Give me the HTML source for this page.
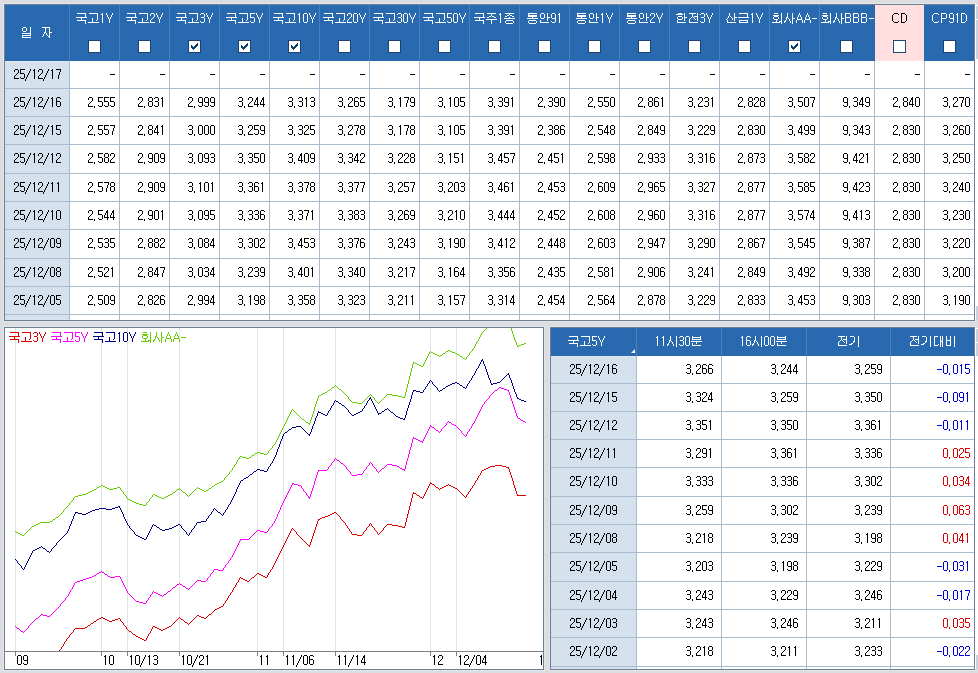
<!DOCTYPE html>
<html><head><meta charset="utf-8"><style>
html,body{margin:0;padding:0;width:978px;height:673px;overflow:hidden;background:#dcdde1;}
body{position:relative;font-family:"Liberation Sans", sans-serif;}
.t{position:absolute;white-space:nowrap;font-family:"Liberation Sans", sans-serif;}
</style></head><body>
<div style="position:absolute;left:0px;top:0px;width:978px;height:673px;background:#dcdde1;"></div><div style="position:absolute;left:3px;top:3px;width:973px;height:319px;background:#e5e5e8;"></div><div style="position:absolute;left:4px;top:4px;width:971px;height:317px;background:#6c8097;"></div><div style="position:absolute;left:5px;top:5px;width:969px;height:315px;background:#ffffff;"></div><div style="position:absolute;left:5px;top:5px;width:969px;height:56px;background:#2969b0;"></div><div style="position:absolute;left:875px;top:5px;width:49px;height:56px;background:#ffdfdf;"></div><div style="position:absolute;left:69px;top:5px;width:1px;height:56px;background:#4a80bc;"></div><div style="position:absolute;left:119px;top:5px;width:1px;height:56px;background:#4a80bc;"></div><div style="position:absolute;left:169px;top:5px;width:1px;height:56px;background:#4a80bc;"></div><div style="position:absolute;left:219px;top:5px;width:1px;height:56px;background:#4a80bc;"></div><div style="position:absolute;left:269px;top:5px;width:1px;height:56px;background:#4a80bc;"></div><div style="position:absolute;left:319px;top:5px;width:1px;height:56px;background:#4a80bc;"></div><div style="position:absolute;left:369px;top:5px;width:1px;height:56px;background:#4a80bc;"></div><div style="position:absolute;left:419px;top:5px;width:1px;height:56px;background:#4a80bc;"></div><div style="position:absolute;left:469px;top:5px;width:1px;height:56px;background:#4a80bc;"></div><div style="position:absolute;left:519px;top:5px;width:1px;height:56px;background:#4a80bc;"></div><div style="position:absolute;left:569px;top:5px;width:1px;height:56px;background:#4a80bc;"></div><div style="position:absolute;left:619px;top:5px;width:1px;height:56px;background:#4a80bc;"></div><div style="position:absolute;left:669px;top:5px;width:1px;height:56px;background:#4a80bc;"></div><div style="position:absolute;left:719px;top:5px;width:1px;height:56px;background:#4a80bc;"></div><div style="position:absolute;left:769px;top:5px;width:1px;height:56px;background:#4a80bc;"></div><div style="position:absolute;left:819px;top:5px;width:1px;height:56px;background:#4a80bc;"></div><div style="position:absolute;left:5px;top:61px;width:64px;height:259px;background:#d5e1ed;"></div><div style="position:absolute;left:5px;top:61px;width:64px;height:1px;background:#dfe8f1;"></div><div style="position:absolute;left:69px;top:61px;width:1px;height:259px;background:#a9bccf;"></div><div style="position:absolute;left:119px;top:61px;width:1px;height:259px;background:#a9bccf;"></div><div style="position:absolute;left:169px;top:61px;width:1px;height:259px;background:#a9bccf;"></div><div style="position:absolute;left:219px;top:61px;width:1px;height:259px;background:#a9bccf;"></div><div style="position:absolute;left:269px;top:61px;width:1px;height:259px;background:#a9bccf;"></div><div style="position:absolute;left:319px;top:61px;width:1px;height:259px;background:#a9bccf;"></div><div style="position:absolute;left:369px;top:61px;width:1px;height:259px;background:#a9bccf;"></div><div style="position:absolute;left:419px;top:61px;width:1px;height:259px;background:#a9bccf;"></div><div style="position:absolute;left:469px;top:61px;width:1px;height:259px;background:#a9bccf;"></div><div style="position:absolute;left:519px;top:61px;width:1px;height:259px;background:#a9bccf;"></div><div style="position:absolute;left:569px;top:61px;width:1px;height:259px;background:#a9bccf;"></div><div style="position:absolute;left:619px;top:61px;width:1px;height:259px;background:#a9bccf;"></div><div style="position:absolute;left:669px;top:61px;width:1px;height:259px;background:#a9bccf;"></div><div style="position:absolute;left:719px;top:61px;width:1px;height:259px;background:#a9bccf;"></div><div style="position:absolute;left:769px;top:61px;width:1px;height:259px;background:#a9bccf;"></div><div style="position:absolute;left:819px;top:61px;width:1px;height:259px;background:#a9bccf;"></div><div style="position:absolute;left:874px;top:61px;width:1px;height:259px;background:#a9bccf;"></div><div style="position:absolute;left:924px;top:61px;width:1px;height:259px;background:#a9bccf;"></div><div style="position:absolute;left:5px;top:88px;width:969px;height:1px;background:#a9bccf;"></div><div style="position:absolute;left:5px;top:116px;width:969px;height:1px;background:#a9bccf;"></div><div style="position:absolute;left:5px;top:144px;width:969px;height:1px;background:#a9bccf;"></div><div style="position:absolute;left:5px;top:173px;width:969px;height:1px;background:#a9bccf;"></div><div style="position:absolute;left:5px;top:201px;width:969px;height:1px;background:#a9bccf;"></div><div style="position:absolute;left:5px;top:229px;width:969px;height:1px;background:#a9bccf;"></div><div style="position:absolute;left:5px;top:258px;width:969px;height:1px;background:#a9bccf;"></div><div style="position:absolute;left:5px;top:286px;width:969px;height:1px;background:#a9bccf;"></div><div style="position:absolute;left:5px;top:314px;width:969px;height:1px;background:#a9bccf;"></div><div style="position:absolute;left:88px;top:40px;width:13px;height:13px;box-sizing:border-box;border:1px solid #1d4270;background:#fff"></div><div style="position:absolute;left:138px;top:40px;width:13px;height:13px;box-sizing:border-box;border:1px solid #1d4270;background:#fff"></div><div style="position:absolute;left:188px;top:40px;width:13px;height:13px;box-sizing:border-box;border:1px solid #1d4270;background:#fff"></div><svg style="position:absolute;left:188px;top:40px" width="13" height="13" shape-rendering="crispEdges"><path d="M3 5h1v3h-1zM4 6h1v3h-1zM5 7h1v3h-1zM6 6h1v3h-1zM7 5h1v3h-1zM8 4h1v3h-1zM9 3h1v3h-1z" fill="#0c3d6f"/></svg><div style="position:absolute;left:238px;top:40px;width:13px;height:13px;box-sizing:border-box;border:1px solid #1d4270;background:#fff"></div><svg style="position:absolute;left:238px;top:40px" width="13" height="13" shape-rendering="crispEdges"><path d="M3 5h1v3h-1zM4 6h1v3h-1zM5 7h1v3h-1zM6 6h1v3h-1zM7 5h1v3h-1zM8 4h1v3h-1zM9 3h1v3h-1z" fill="#0c3d6f"/></svg><div style="position:absolute;left:288px;top:40px;width:13px;height:13px;box-sizing:border-box;border:1px solid #1d4270;background:#fff"></div><svg style="position:absolute;left:288px;top:40px" width="13" height="13" shape-rendering="crispEdges"><path d="M3 5h1v3h-1zM4 6h1v3h-1zM5 7h1v3h-1zM6 6h1v3h-1zM7 5h1v3h-1zM8 4h1v3h-1zM9 3h1v3h-1z" fill="#0c3d6f"/></svg><div style="position:absolute;left:338px;top:40px;width:13px;height:13px;box-sizing:border-box;border:1px solid #1d4270;background:#fff"></div><div style="position:absolute;left:388px;top:40px;width:13px;height:13px;box-sizing:border-box;border:1px solid #1d4270;background:#fff"></div><div style="position:absolute;left:438px;top:40px;width:13px;height:13px;box-sizing:border-box;border:1px solid #1d4270;background:#fff"></div><div style="position:absolute;left:488px;top:40px;width:13px;height:13px;box-sizing:border-box;border:1px solid #1d4270;background:#fff"></div><div style="position:absolute;left:538px;top:40px;width:13px;height:13px;box-sizing:border-box;border:1px solid #1d4270;background:#fff"></div><div style="position:absolute;left:588px;top:40px;width:13px;height:13px;box-sizing:border-box;border:1px solid #1d4270;background:#fff"></div><div style="position:absolute;left:638px;top:40px;width:13px;height:13px;box-sizing:border-box;border:1px solid #1d4270;background:#fff"></div><div style="position:absolute;left:688px;top:40px;width:13px;height:13px;box-sizing:border-box;border:1px solid #1d4270;background:#fff"></div><div style="position:absolute;left:738px;top:40px;width:13px;height:13px;box-sizing:border-box;border:1px solid #1d4270;background:#fff"></div><div style="position:absolute;left:788px;top:40px;width:13px;height:13px;box-sizing:border-box;border:1px solid #1d4270;background:#fff"></div><svg style="position:absolute;left:788px;top:40px" width="13" height="13" shape-rendering="crispEdges"><path d="M3 5h1v3h-1zM4 6h1v3h-1zM5 7h1v3h-1zM6 6h1v3h-1zM7 5h1v3h-1zM8 4h1v3h-1zM9 3h1v3h-1z" fill="#0c3d6f"/></svg><div style="position:absolute;left:840px;top:40px;width:13px;height:13px;box-sizing:border-box;border:1px solid #1d4270;background:#fff"></div><div style="position:absolute;left:893px;top:40px;width:13px;height:13px;box-sizing:border-box;border:1px solid #1f4a7a;background:#fff"></div><div style="position:absolute;left:943px;top:40px;width:13px;height:13px;box-sizing:border-box;border:1px solid #1d4270;background:#fff"></div><div style="position:absolute;left:975px;top:5px;width:3px;height:315px;background:#ffffff;"></div><div style="position:absolute;left:976px;top:6px;width:2px;height:13px;background:#c8d2dd;"></div><div style="position:absolute;left:976px;top:20px;width:2px;height:39px;background:#c8d2dd;"></div><div style="position:absolute;left:976px;top:306px;width:2px;height:14px;background:#c8d2dd;"></div><div style="position:absolute;left:3px;top:326px;width:542px;height:345px;background:#e5e5e8;"></div><div style="position:absolute;left:4px;top:327px;width:540px;height:343px;background:#6c8097;"></div><div style="position:absolute;left:5px;top:328px;width:538px;height:341px;background:#ffffff;"></div><div style="position:absolute;left:549px;top:326px;width:427px;height:345px;background:#e5e5e8;"></div><div style="position:absolute;left:550px;top:327px;width:425px;height:343px;background:#6c8097;"></div><div style="position:absolute;left:551px;top:328px;width:423px;height:341px;background:#ffffff;"></div><div style="position:absolute;left:551px;top:328px;width:423px;height:28px;background:#2969b0;"></div><div style="position:absolute;left:636px;top:328px;width:1px;height:28px;background:#4a80bc;"></div><div style="position:absolute;left:721px;top:328px;width:1px;height:28px;background:#4a80bc;"></div><div style="position:absolute;left:806px;top:328px;width:1px;height:28px;background:#4a80bc;"></div><div style="position:absolute;left:890px;top:328px;width:1px;height:28px;background:#4a80bc;"></div><div style="position:absolute;left:551px;top:356px;width:85px;height:313px;background:#d5e1ed;"></div><div style="position:absolute;left:551px;top:356px;width:85px;height:1px;background:#dfe8f1;"></div><div style="position:absolute;left:636px;top:356px;width:1px;height:313px;background:#a9bccf;"></div><div style="position:absolute;left:721px;top:356px;width:1px;height:313px;background:#a9bccf;"></div><div style="position:absolute;left:806px;top:356px;width:1px;height:313px;background:#a9bccf;"></div><div style="position:absolute;left:890px;top:356px;width:1px;height:313px;background:#a9bccf;"></div><div style="position:absolute;left:551px;top:383px;width:423px;height:1px;background:#a9bccf;"></div><div style="position:absolute;left:551px;top:411px;width:423px;height:1px;background:#a9bccf;"></div><div style="position:absolute;left:551px;top:439px;width:423px;height:1px;background:#a9bccf;"></div><div style="position:absolute;left:551px;top:467px;width:423px;height:1px;background:#a9bccf;"></div><div style="position:absolute;left:551px;top:496px;width:423px;height:1px;background:#a9bccf;"></div><div style="position:absolute;left:551px;top:524px;width:423px;height:1px;background:#a9bccf;"></div><div style="position:absolute;left:551px;top:552px;width:423px;height:1px;background:#a9bccf;"></div><div style="position:absolute;left:551px;top:581px;width:423px;height:1px;background:#a9bccf;"></div><div style="position:absolute;left:551px;top:609px;width:423px;height:1px;background:#a9bccf;"></div><div style="position:absolute;left:551px;top:637px;width:423px;height:1px;background:#a9bccf;"></div><div style="position:absolute;left:551px;top:666px;width:423px;height:1px;background:#a9bccf;"></div><svg style="position:absolute;left:630px;top:348px" width="6" height="6"><path d="M1 5 L5 5 L5 1 Z" fill="#fff"/></svg><div style="position:absolute;left:975px;top:328px;width:3px;height:341px;background:#ffffff;"></div><div style="position:absolute;left:976px;top:329px;width:2px;height:13px;background:#c8d2dd;"></div><div style="position:absolute;left:976px;top:343px;width:2px;height:13px;background:#c8d2dd;"></div><div style="position:absolute;left:976px;top:655px;width:2px;height:14px;background:#c8d2dd;"></div><svg style="position:absolute;left:5px;top:328px" width="538" height="341" shape-rendering="crispEdges"><line x1="10.5" y1="0" x2="10.5" y2="323" stroke="#e3e3e3" stroke-width="1"/><line x1="96.5" y1="0" x2="96.5" y2="323" stroke="#e3e3e3" stroke-width="1"/><line x1="122.5" y1="0" x2="122.5" y2="323" stroke="#e3e3e3" stroke-width="1"/><line x1="174.5" y1="0" x2="174.5" y2="323" stroke="#e3e3e3" stroke-width="1"/><line x1="252.5" y1="0" x2="252.5" y2="323" stroke="#e3e3e3" stroke-width="1"/><line x1="278.5" y1="0" x2="278.5" y2="323" stroke="#e3e3e3" stroke-width="1"/><line x1="330.5" y1="0" x2="330.5" y2="323" stroke="#e3e3e3" stroke-width="1"/><line x1="425.5" y1="0" x2="425.5" y2="323" stroke="#e3e3e3" stroke-width="1"/><line x1="451.5" y1="0" x2="451.5" y2="323" stroke="#e3e3e3" stroke-width="1"/><path d="M490 137h7v1h-7zM485 138h5v1h-5zM497 138h4v1h-4zM483 139h2v1h-2zM501 139h3v1h-3zM481 140h2v1h-2zM503 140h1v1h-1zM479 141h2v1h-2zM504 141h1v1h-1zM477 142h2v1h-2zM504 142h1v1h-1zM476 143h1v1h-1zM504 143h1v1h-1zM476 144h1v1h-1zM505 144h1v1h-1zM475 145h1v1h-1zM505 145h1v1h-1zM475 146h1v1h-1zM505 146h1v1h-1zM474 147h1v1h-1zM506 147h1v1h-1zM473 148h1v1h-1zM506 148h1v1h-1zM473 149h1v1h-1zM506 149h1v1h-1zM472 150h1v1h-1zM507 150h1v1h-1zM472 151h1v1h-1zM507 151h1v1h-1zM471 152h1v1h-1zM507 152h1v1h-1zM470 153h1v1h-1zM508 153h1v1h-1zM425 154h1v1h-1zM470 154h1v1h-1zM508 154h1v1h-1zM425 155h2v1h-2zM469 155h1v1h-1zM508 155h1v1h-1zM424 156h1v1h-1zM427 156h2v1h-2zM443 156h1v1h-1zM469 156h1v1h-1zM508 156h1v1h-1zM424 157h1v1h-1zM429 157h1v1h-1zM441 157h2v1h-2zM444 157h2v1h-2zM468 157h1v1h-1zM509 157h1v1h-1zM423 158h1v1h-1zM430 158h1v1h-1zM439 158h2v1h-2zM446 158h2v1h-2zM467 158h1v1h-1zM509 158h1v1h-1zM423 159h1v1h-1zM431 159h2v1h-2zM437 159h2v1h-2zM448 159h2v1h-2zM467 159h1v1h-1zM509 159h1v1h-1zM422 160h1v1h-1zM433 160h1v1h-1zM435 160h2v1h-2zM450 160h2v1h-2zM466 160h1v1h-1zM510 160h1v1h-1zM422 161h1v1h-1zM434 161h1v1h-1zM452 161h1v1h-1zM465 161h1v1h-1zM510 161h1v1h-1zM421 162h1v1h-1zM453 162h1v1h-1zM465 162h1v1h-1zM510 162h1v1h-1zM421 163h1v1h-1zM454 163h1v1h-1zM464 163h1v1h-1zM511 163h1v1h-1zM408 164h1v1h-1zM420 164h1v1h-1zM455 164h1v1h-1zM463 164h1v1h-1zM511 164h1v1h-1zM408 165h3v1h-3zM420 165h1v1h-1zM456 165h1v1h-1zM463 165h1v1h-1zM511 165h1v1h-1zM407 166h1v1h-1zM411 166h1v1h-1zM419 166h1v1h-1zM457 166h1v1h-1zM462 166h1v1h-1zM512 166h1v1h-1zM407 167h1v1h-1zM412 167h2v1h-2zM419 167h1v1h-1zM458 167h1v1h-1zM461 167h1v1h-1zM512 167h9v1h-9zM407 168h1v1h-1zM414 168h1v1h-1zM418 168h1v1h-1zM459 168h1v1h-1zM461 168h1v1h-1zM407 169h1v1h-1zM415 169h2v1h-2zM418 169h1v1h-1zM460 169h1v1h-1zM406 170h1v1h-1zM417 170h1v1h-1zM406 171h1v1h-1zM406 172h1v1h-1zM406 173h1v1h-1zM405 174h1v1h-1zM405 175h1v1h-1zM405 176h1v1h-1zM405 177h1v1h-1zM404 178h1v1h-1zM404 179h1v1h-1zM404 180h1v1h-1zM404 181h1v1h-1zM403 182h1v1h-1zM403 183h1v1h-1zM329 184h2v1h-2zM403 184h1v1h-1zM327 185h2v1h-2zM331 185h1v1h-1zM403 185h1v1h-1zM325 186h2v1h-2zM332 186h1v1h-1zM402 186h1v1h-1zM323 187h2v1h-2zM333 187h1v1h-1zM402 187h1v1h-1zM320 188h3v1h-3zM334 188h1v1h-1zM402 188h1v1h-1zM317 189h3v1h-3zM335 189h1v1h-1zM402 189h1v1h-1zM315 190h2v1h-2zM335 190h1v1h-1zM401 190h1v1h-1zM313 191h2v1h-2zM336 191h1v1h-1zM401 191h1v1h-1zM313 192h1v1h-1zM337 192h1v1h-1zM401 192h1v1h-1zM312 193h1v1h-1zM338 193h1v1h-1zM401 193h1v1h-1zM312 194h1v1h-1zM339 194h1v1h-1zM400 194h1v1h-1zM312 195h1v1h-1zM340 195h1v1h-1zM365 195h1v1h-1zM400 195h1v1h-1zM311 196h1v1h-1zM340 196h1v1h-1zM364 196h1v1h-1zM366 196h1v1h-1zM382 196h5v1h-5zM400 196h1v1h-1zM311 197h1v1h-1zM341 197h1v1h-1zM364 197h1v1h-1zM366 197h1v1h-1zM381 197h1v1h-1zM387 197h6v1h-6zM400 197h1v1h-1zM311 198h1v1h-1zM342 198h1v1h-1zM363 198h1v1h-1zM367 198h1v1h-1zM380 198h1v1h-1zM393 198h4v1h-4zM399 198h1v1h-1zM310 199h1v1h-1zM342 199h1v1h-1zM362 199h1v1h-1zM368 199h1v1h-1zM379 199h1v1h-1zM397 199h3v1h-3zM287 200h1v1h-1zM310 200h1v1h-1zM343 200h1v1h-1zM361 200h1v1h-1zM369 200h1v1h-1zM378 200h1v1h-1zM286 201h1v1h-1zM288 201h1v1h-1zM310 201h1v1h-1zM344 201h1v1h-1zM361 201h1v1h-1zM369 201h1v1h-1zM378 201h1v1h-1zM286 202h1v1h-1zM289 202h1v1h-1zM309 202h1v1h-1zM344 202h1v1h-1zM360 202h1v1h-1zM370 202h1v1h-1zM377 202h1v1h-1zM285 203h1v1h-1zM290 203h1v1h-1zM309 203h1v1h-1zM345 203h1v1h-1zM359 203h1v1h-1zM371 203h1v1h-1zM376 203h1v1h-1zM285 204h1v1h-1zM291 204h1v1h-1zM309 204h1v1h-1zM346 204h1v1h-1zM358 204h1v1h-1zM372 204h1v1h-1zM375 204h1v1h-1zM284 205h1v1h-1zM291 205h1v1h-1zM308 205h1v1h-1zM346 205h1v1h-1zM358 205h1v1h-1zM372 205h1v1h-1zM374 205h1v1h-1zM284 206h1v1h-1zM292 206h1v1h-1zM308 206h1v1h-1zM347 206h5v1h-5zM357 206h1v1h-1zM373 206h1v1h-1zM283 207h1v1h-1zM293 207h1v1h-1zM308 207h1v1h-1zM352 207h5v1h-5zM283 208h1v1h-1zM294 208h1v1h-1zM307 208h1v1h-1zM282 209h1v1h-1zM295 209h1v1h-1zM307 209h1v1h-1zM282 210h1v1h-1zM296 210h1v1h-1zM307 210h1v1h-1zM281 211h1v1h-1zM297 211h1v1h-1zM306 211h1v1h-1zM281 212h1v1h-1zM298 212h1v1h-1zM306 212h1v1h-1zM280 213h1v1h-1zM299 213h1v1h-1zM306 213h1v1h-1zM280 214h1v1h-1zM300 214h1v1h-1zM305 214h1v1h-1zM279 215h1v1h-1zM301 215h1v1h-1zM305 215h1v1h-1zM279 216h1v1h-1zM302 216h1v1h-1zM305 216h1v1h-1zM278 217h1v1h-1zM303 217h2v1h-2zM278 218h1v1h-1zM304 218h1v1h-1zM277 219h1v1h-1zM277 220h1v1h-1zM276 221h1v1h-1zM276 222h1v1h-1zM275 223h1v1h-1zM275 224h1v1h-1zM274 225h1v1h-1zM274 226h1v1h-1zM273 227h1v1h-1zM273 228h1v1h-1zM272 229h1v1h-1zM272 230h1v1h-1zM271 231h1v1h-1zM271 232h1v1h-1zM270 233h1v1h-1zM270 234h1v1h-1zM269 235h1v1h-1zM269 236h1v1h-1zM268 237h1v1h-1zM268 238h1v1h-1zM267 239h1v1h-1zM267 240h1v1h-1zM266 241h1v1h-1zM265 242h1v1h-1zM265 243h1v1h-1zM264 244h1v1h-1zM252 245h2v1h-2zM263 245h1v1h-1zM251 246h1v1h-1zM254 246h2v1h-2zM263 246h1v1h-1zM250 247h1v1h-1zM256 247h2v1h-2zM262 247h1v1h-1zM249 248h1v1h-1zM258 248h2v1h-2zM262 248h1v1h-1zM235 249h1v1h-1zM247 249h2v1h-2zM260 249h2v1h-2zM234 250h1v1h-1zM236 250h2v1h-2zM246 250h1v1h-1zM234 251h1v1h-1zM238 251h2v1h-2zM245 251h1v1h-1zM233 252h1v1h-1zM240 252h2v1h-2zM244 252h1v1h-1zM233 253h1v1h-1zM242 253h2v1h-2zM232 254h1v1h-1zM231 255h1v1h-1zM231 256h1v1h-1zM230 257h1v1h-1zM230 258h1v1h-1zM229 259h1v1h-1zM228 260h1v1h-1zM228 261h1v1h-1zM227 262h1v1h-1zM227 263h1v1h-1zM226 264h1v1h-1zM225 265h1v1h-1zM225 266h1v1h-1zM224 267h1v1h-1zM223 268h1v1h-1zM223 269h1v1h-1zM222 270h1v1h-1zM222 271h1v1h-1zM221 272h1v1h-1zM220 273h1v1h-1zM220 274h1v1h-1zM219 275h1v1h-1zM218 276h1v1h-1zM218 277h1v1h-1zM216 278h2v1h-2zM214 279h2v1h-2zM212 280h2v1h-2zM210 281h2v1h-2zM209 282h1v1h-1zM208 283h1v1h-1zM207 284h1v1h-1zM206 285h1v1h-1zM204 286h2v1h-2zM192 287h2v1h-2zM203 287h1v1h-1zM191 288h1v1h-1zM194 288h2v1h-2zM202 288h1v1h-1zM96 289h2v1h-2zM174 289h1v1h-1zM190 289h1v1h-1zM196 289h3v1h-3zM201 289h1v1h-1zM94 290h2v1h-2zM98 290h2v1h-2zM113 290h2v1h-2zM173 290h1v1h-1zM175 290h1v1h-1zM189 290h1v1h-1zM199 290h2v1h-2zM92 291h2v1h-2zM100 291h2v1h-2zM110 291h3v1h-3zM115 291h1v1h-1zM172 291h1v1h-1zM176 291h2v1h-2zM188 291h1v1h-1zM91 292h1v1h-1zM102 292h2v1h-2zM107 292h3v1h-3zM115 292h1v1h-1zM171 292h1v1h-1zM178 292h1v1h-1zM187 292h1v1h-1zM89 293h2v1h-2zM104 293h3v1h-3zM116 293h1v1h-1zM170 293h1v1h-1zM179 293h1v1h-1zM186 293h1v1h-1zM88 294h1v1h-1zM117 294h1v1h-1zM169 294h1v1h-1zM180 294h2v1h-2zM185 294h1v1h-1zM86 295h2v1h-2zM118 295h1v1h-1zM168 295h1v1h-1zM182 295h1v1h-1zM184 295h1v1h-1zM85 296h1v1h-1zM118 296h1v1h-1zM167 296h1v1h-1zM183 296h1v1h-1zM83 297h2v1h-2zM119 297h1v1h-1zM166 297h1v1h-1zM82 298h1v1h-1zM120 298h1v1h-1zM148 298h2v1h-2zM164 298h2v1h-2zM80 299h2v1h-2zM121 299h1v1h-1zM147 299h1v1h-1zM150 299h2v1h-2zM162 299h2v1h-2zM70 300h10v1h-10zM121 300h1v1h-1zM147 300h1v1h-1zM152 300h2v1h-2zM160 300h2v1h-2zM69 301h1v1h-1zM122 301h1v1h-1zM146 301h1v1h-1zM154 301h2v1h-2zM158 301h2v1h-2zM68 302h1v1h-1zM123 302h1v1h-1zM146 302h1v1h-1zM156 302h2v1h-2zM68 303h1v1h-1zM124 303h2v1h-2zM145 303h1v1h-1zM67 304h1v1h-1zM126 304h1v1h-1zM145 304h1v1h-1zM66 305h1v1h-1zM127 305h1v1h-1zM144 305h1v1h-1zM65 306h1v1h-1zM128 306h2v1h-2zM143 306h1v1h-1zM64 307h1v1h-1zM130 307h1v1h-1zM143 307h1v1h-1zM64 308h1v1h-1zM131 308h2v1h-2zM142 308h1v1h-1zM63 309h1v1h-1zM133 309h2v1h-2zM142 309h1v1h-1zM62 310h1v1h-1zM135 310h2v1h-2zM141 310h1v1h-1zM61 311h1v1h-1zM137 311h2v1h-2zM141 311h1v1h-1zM61 312h1v1h-1zM139 312h2v1h-2zM60 313h1v1h-1zM59 314h1v1h-1zM59 315h1v1h-1zM58 316h1v1h-1zM58 317h1v1h-1zM57 318h1v1h-1zM56 319h1v1h-1zM56 320h1v1h-1zM55 321h1v1h-1zM54 322h1v1h-1z" fill="#dc0000"/><path d="M494 59h2v1h-2zM493 60h1v1h-1zM496 60h3v1h-3zM492 61h1v1h-1zM499 61h3v1h-3zM490 62h2v1h-2zM502 62h2v1h-2zM489 63h1v1h-1zM503 63h1v1h-1zM488 64h1v1h-1zM504 64h1v1h-1zM487 65h1v1h-1zM504 65h1v1h-1zM486 66h1v1h-1zM504 66h1v1h-1zM485 67h1v1h-1zM505 67h1v1h-1zM484 68h1v1h-1zM505 68h1v1h-1zM484 69h1v1h-1zM505 69h1v1h-1zM483 70h1v1h-1zM506 70h1v1h-1zM482 71h1v1h-1zM506 71h1v1h-1zM481 72h1v1h-1zM506 72h1v1h-1zM480 73h1v1h-1zM507 73h1v1h-1zM479 74h1v1h-1zM507 74h1v1h-1zM479 75h1v1h-1zM507 75h1v1h-1zM478 76h1v1h-1zM508 76h1v1h-1zM477 77h1v1h-1zM508 77h1v1h-1zM477 78h1v1h-1zM508 78h1v1h-1zM476 79h1v1h-1zM509 79h1v1h-1zM476 80h1v1h-1zM509 80h1v1h-1zM475 81h1v1h-1zM509 81h1v1h-1zM475 82h1v1h-1zM510 82h1v1h-1zM474 83h1v1h-1zM510 83h1v1h-1zM474 84h1v1h-1zM510 84h1v1h-1zM473 85h1v1h-1zM511 85h1v1h-1zM473 86h1v1h-1zM511 86h1v1h-1zM472 87h1v1h-1zM511 87h1v1h-1zM472 88h1v1h-1zM512 88h1v1h-1zM471 89h1v1h-1zM512 89h1v1h-1zM471 90h1v1h-1zM513 90h2v1h-2zM470 91h1v1h-1zM515 91h1v1h-1zM470 92h1v1h-1zM516 92h2v1h-2zM443 93h1v1h-1zM469 93h1v1h-1zM518 93h2v1h-2zM442 94h1v1h-1zM444 94h2v1h-2zM469 94h1v1h-1zM520 94h1v1h-1zM441 95h1v1h-1zM446 95h1v1h-1zM468 95h1v1h-1zM441 96h1v1h-1zM447 96h2v1h-2zM467 96h1v1h-1zM425 97h1v1h-1zM440 97h1v1h-1zM449 97h2v1h-2zM467 97h1v1h-1zM425 98h2v1h-2zM439 98h1v1h-1zM451 98h1v1h-1zM466 98h1v1h-1zM424 99h1v1h-1zM427 99h2v1h-2zM438 99h1v1h-1zM452 99h1v1h-1zM466 99h1v1h-1zM424 100h1v1h-1zM429 100h1v1h-1zM437 100h1v1h-1zM453 100h1v1h-1zM465 100h1v1h-1zM423 101h1v1h-1zM430 101h1v1h-1zM436 101h1v1h-1zM454 101h1v1h-1zM464 101h1v1h-1zM423 102h1v1h-1zM431 102h2v1h-2zM436 102h1v1h-1zM455 102h1v1h-1zM464 102h1v1h-1zM422 103h1v1h-1zM433 103h1v1h-1zM435 103h1v1h-1zM456 103h1v1h-1zM463 103h1v1h-1zM422 104h1v1h-1zM434 104h1v1h-1zM456 104h1v1h-1zM462 104h1v1h-1zM421 105h1v1h-1zM457 105h1v1h-1zM462 105h1v1h-1zM421 106h1v1h-1zM458 106h1v1h-1zM461 106h1v1h-1zM420 107h1v1h-1zM459 107h1v1h-1zM461 107h1v1h-1zM420 108h1v1h-1zM460 108h1v1h-1zM408 109h1v1h-1zM419 109h1v1h-1zM408 110h3v1h-3zM419 110h1v1h-1zM407 111h1v1h-1zM411 111h2v1h-2zM418 111h1v1h-1zM407 112h1v1h-1zM413 112h2v1h-2zM418 112h1v1h-1zM407 113h1v1h-1zM415 113h3v1h-3zM407 114h1v1h-1zM417 114h1v1h-1zM406 115h1v1h-1zM406 116h1v1h-1zM406 117h1v1h-1zM406 118h1v1h-1zM405 119h1v1h-1zM405 120h1v1h-1zM405 121h1v1h-1zM404 122h1v1h-1zM404 123h1v1h-1zM404 124h1v1h-1zM404 125h1v1h-1zM403 126h1v1h-1zM403 127h1v1h-1zM403 128h1v1h-1zM403 129h1v1h-1zM330 130h1v1h-1zM402 130h1v1h-1zM329 131h1v1h-1zM331 131h1v1h-1zM402 131h1v1h-1zM329 132h1v1h-1zM332 132h2v1h-2zM402 132h1v1h-1zM328 133h1v1h-1zM334 133h1v1h-1zM401 133h1v1h-1zM327 134h1v1h-1zM335 134h1v1h-1zM365 134h1v1h-1zM401 134h1v1h-1zM326 135h1v1h-1zM336 135h2v1h-2zM364 135h1v1h-1zM366 135h1v1h-1zM401 135h1v1h-1zM326 136h1v1h-1zM338 136h1v1h-1zM364 136h1v1h-1zM367 136h1v1h-1zM382 136h5v1h-5zM401 136h1v1h-1zM325 137h1v1h-1zM339 137h1v1h-1zM363 137h1v1h-1zM367 137h1v1h-1zM381 137h1v1h-1zM387 137h5v1h-5zM400 137h1v1h-1zM324 138h1v1h-1zM340 138h1v1h-1zM362 138h1v1h-1zM368 138h1v1h-1zM380 138h1v1h-1zM392 138h2v1h-2zM400 138h1v1h-1zM323 139h1v1h-1zM341 139h1v1h-1zM361 139h1v1h-1zM369 139h1v1h-1zM379 139h1v1h-1zM394 139h1v1h-1zM400 139h1v1h-1zM323 140h1v1h-1zM341 140h1v1h-1zM361 140h1v1h-1zM370 140h1v1h-1zM377 140h2v1h-2zM395 140h2v1h-2zM400 140h1v1h-1zM322 141h1v1h-1zM342 141h1v1h-1zM360 141h1v1h-1zM371 141h1v1h-1zM376 141h1v1h-1zM397 141h3v1h-3zM313 142h9v1h-9zM343 142h1v1h-1zM359 142h1v1h-1zM371 142h1v1h-1zM375 142h1v1h-1zM399 142h1v1h-1zM313 143h1v1h-1zM344 143h1v1h-1zM358 143h1v1h-1zM372 143h1v1h-1zM374 143h1v1h-1zM312 144h1v1h-1zM345 144h1v1h-1zM358 144h1v1h-1zM373 144h1v1h-1zM312 145h1v1h-1zM345 145h1v1h-1zM357 145h1v1h-1zM312 146h1v1h-1zM346 146h1v1h-1zM352 146h5v1h-5zM311 147h1v1h-1zM347 147h5v1h-5zM311 148h1v1h-1zM311 149h1v1h-1zM310 150h1v1h-1zM310 151h1v1h-1zM310 152h1v1h-1zM309 153h1v1h-1zM309 154h1v1h-1zM287 155h2v1h-2zM309 155h1v1h-1zM287 156h1v1h-1zM289 156h4v1h-4zM309 156h1v1h-1zM286 157h1v1h-1zM293 157h3v1h-3zM308 157h1v1h-1zM286 158h1v1h-1zM296 158h1v1h-1zM308 158h1v1h-1zM285 159h1v1h-1zM296 159h1v1h-1zM308 159h1v1h-1zM285 160h1v1h-1zM297 160h1v1h-1zM307 160h1v1h-1zM284 161h1v1h-1zM298 161h1v1h-1zM307 161h1v1h-1zM284 162h1v1h-1zM298 162h1v1h-1zM307 162h1v1h-1zM283 163h1v1h-1zM299 163h1v1h-1zM306 163h1v1h-1zM283 164h1v1h-1zM300 164h1v1h-1zM306 164h1v1h-1zM282 165h1v1h-1zM301 165h1v1h-1zM306 165h1v1h-1zM282 166h1v1h-1zM301 166h1v1h-1zM305 166h1v1h-1zM281 167h1v1h-1zM302 167h1v1h-1zM305 167h1v1h-1zM281 168h1v1h-1zM303 168h1v1h-1zM305 168h1v1h-1zM280 169h1v1h-1zM303 169h2v1h-2zM280 170h1v1h-1zM304 170h1v1h-1zM279 171h1v1h-1zM279 172h1v1h-1zM278 173h1v1h-1zM278 174h1v1h-1zM277 175h1v1h-1zM277 176h1v1h-1zM276 177h1v1h-1zM276 178h1v1h-1zM275 179h1v1h-1zM275 180h1v1h-1zM275 181h1v1h-1zM274 182h1v1h-1zM274 183h1v1h-1zM273 184h1v1h-1zM273 185h1v1h-1zM272 186h1v1h-1zM272 187h1v1h-1zM272 188h1v1h-1zM271 189h1v1h-1zM271 190h1v1h-1zM270 191h1v1h-1zM270 192h1v1h-1zM269 193h1v1h-1zM269 194h1v1h-1zM268 195h1v1h-1zM267 196h1v1h-1zM267 197h1v1h-1zM266 198h1v1h-1zM265 199h1v1h-1zM264 200h1v1h-1zM263 201h1v1h-1zM252 202h3v1h-3zM263 202h1v1h-1zM251 203h1v1h-1zM255 203h4v1h-4zM262 203h1v1h-1zM250 204h1v1h-1zM259 204h3v1h-3zM249 205h1v1h-1zM248 206h1v1h-1zM247 207h1v1h-1zM246 208h1v1h-1zM245 209h1v1h-1zM244 210h1v1h-1zM235 211h9v1h-9zM235 212h1v1h-1zM234 213h1v1h-1zM234 214h1v1h-1zM233 215h1v1h-1zM233 216h1v1h-1zM232 217h1v1h-1zM232 218h1v1h-1zM231 219h1v1h-1zM231 220h1v1h-1zM230 221h1v1h-1zM230 222h1v1h-1zM229 223h1v1h-1zM229 224h1v1h-1zM228 225h1v1h-1zM228 226h1v1h-1zM227 227h1v1h-1zM227 228h1v1h-1zM226 229h1v1h-1zM225 230h1v1h-1zM225 231h1v1h-1zM224 232h1v1h-1zM223 233h1v1h-1zM223 234h1v1h-1zM222 235h1v1h-1zM221 236h1v1h-1zM220 237h1v1h-1zM220 238h1v1h-1zM219 239h1v1h-1zM218 240h1v1h-1zM209 241h4v1h-4zM218 241h1v1h-1zM208 242h1v1h-1zM213 242h5v1h-5zM96 243h1v1h-1zM208 243h1v1h-1zM94 244h2v1h-2zM97 244h2v1h-2zM207 244h1v1h-1zM92 245h2v1h-2zM99 245h1v1h-1zM206 245h1v1h-1zM91 246h1v1h-1zM100 246h2v1h-2zM205 246h1v1h-1zM89 247h2v1h-2zM102 247h1v1h-1zM205 247h1v1h-1zM87 248h2v1h-2zM103 248h2v1h-2zM110 248h5v1h-5zM204 248h1v1h-1zM84 249h3v1h-3zM105 249h5v1h-5zM115 249h1v1h-1zM203 249h1v1h-1zM81 250h3v1h-3zM115 250h1v1h-1zM202 250h1v1h-1zM78 251h3v1h-3zM116 251h1v1h-1zM202 251h1v1h-1zM75 252h3v1h-3zM116 252h1v1h-1zM192 252h4v1h-4zM201 252h1v1h-1zM72 253h3v1h-3zM117 253h1v1h-1zM191 253h1v1h-1zM196 253h5v1h-5zM70 254h2v1h-2zM117 254h1v1h-1zM190 254h1v1h-1zM69 255h1v1h-1zM118 255h1v1h-1zM174 255h1v1h-1zM189 255h1v1h-1zM69 256h1v1h-1zM118 256h1v1h-1zM172 256h2v1h-2zM175 256h2v1h-2zM188 256h1v1h-1zM68 257h1v1h-1zM119 257h1v1h-1zM171 257h1v1h-1zM177 257h1v1h-1zM187 257h1v1h-1zM68 258h1v1h-1zM119 258h1v1h-1zM170 258h1v1h-1zM178 258h2v1h-2zM186 258h1v1h-1zM67 259h1v1h-1zM120 259h1v1h-1zM168 259h2v1h-2zM180 259h1v1h-1zM185 259h1v1h-1zM67 260h1v1h-1zM120 260h1v1h-1zM167 260h1v1h-1zM181 260h2v1h-2zM184 260h1v1h-1zM66 261h1v1h-1zM121 261h1v1h-1zM166 261h1v1h-1zM183 261h1v1h-1zM65 262h1v1h-1zM121 262h1v1h-1zM165 262h1v1h-1zM65 263h1v1h-1zM122 263h1v1h-1zM148 263h1v1h-1zM163 263h2v1h-2zM64 264h1v1h-1zM122 264h1v1h-1zM147 264h1v1h-1zM149 264h2v1h-2zM162 264h1v1h-1zM64 265h1v1h-1zM123 265h1v1h-1zM147 265h1v1h-1zM151 265h2v1h-2zM161 265h1v1h-1zM63 266h1v1h-1zM124 266h1v1h-1zM146 266h1v1h-1zM153 266h2v1h-2zM159 266h2v1h-2zM63 267h1v1h-1zM125 267h1v1h-1zM145 267h1v1h-1zM155 267h2v1h-2zM158 267h1v1h-1zM62 268h1v1h-1zM126 268h1v1h-1zM145 268h1v1h-1zM157 268h1v1h-1zM61 269h1v1h-1zM127 269h1v1h-1zM144 269h1v1h-1zM60 270h1v1h-1zM128 270h1v1h-1zM143 270h1v1h-1zM60 271h1v1h-1zM129 271h1v1h-1zM143 271h1v1h-1zM59 272h1v1h-1zM130 272h1v1h-1zM142 272h1v1h-1zM58 273h1v1h-1zM131 273h3v1h-3zM141 273h1v1h-1zM57 274h1v1h-1zM134 274h4v1h-4zM141 274h1v1h-1zM56 275h1v1h-1zM138 275h3v1h-3zM55 276h1v1h-1zM55 277h1v1h-1zM54 278h1v1h-1zM53 279h1v1h-1zM52 280h1v1h-1zM51 281h1v1h-1zM50 282h1v1h-1zM49 283h1v1h-1zM48 284h1v1h-1zM47 285h1v1h-1zM36 286h2v1h-2zM46 286h1v1h-1zM35 287h1v1h-1zM38 287h4v1h-4zM45 287h1v1h-1zM34 288h1v1h-1zM42 288h3v1h-3zM33 289h1v1h-1zM31 290h2v1h-2zM30 291h1v1h-1zM29 292h1v1h-1zM28 293h1v1h-1zM27 294h1v1h-1zM26 295h1v1h-1zM25 296h1v1h-1zM24 297h1v1h-1zM10 298h1v1h-1zM23 298h1v1h-1zM11 299h1v1h-1zM23 299h1v1h-1zM12 300h2v1h-2zM22 300h1v1h-1zM14 301h1v1h-1zM21 301h1v1h-1zM15 302h1v1h-1zM20 302h1v1h-1zM16 303h2v1h-2zM19 303h1v1h-1zM18 304h1v1h-1z" fill="#ff00ff"/><path d="M477 31h1v1h-1zM476 32h2v1h-2zM476 33h1v1h-1zM478 33h1v1h-1zM475 34h1v1h-1zM478 34h1v1h-1zM475 35h1v1h-1zM478 35h1v1h-1zM474 36h1v1h-1zM479 36h1v1h-1zM474 37h1v1h-1zM479 37h1v1h-1zM473 38h1v1h-1zM480 38h1v1h-1zM473 39h1v1h-1zM480 39h1v1h-1zM472 40h1v1h-1zM480 40h1v1h-1zM471 41h1v1h-1zM481 41h1v1h-1zM471 42h1v1h-1zM481 42h1v1h-1zM470 43h1v1h-1zM481 43h1v1h-1zM470 44h1v1h-1zM482 44h1v1h-1zM469 45h1v1h-1zM482 45h1v1h-1zM503 45h1v1h-1zM469 46h1v1h-1zM482 46h1v1h-1zM502 46h2v1h-2zM468 47h1v1h-1zM483 47h1v1h-1zM501 47h1v1h-1zM504 47h1v1h-1zM467 48h1v1h-1zM483 48h1v1h-1zM500 48h1v1h-1zM504 48h1v1h-1zM467 49h1v1h-1zM483 49h1v1h-1zM499 49h1v1h-1zM504 49h1v1h-1zM466 50h1v1h-1zM484 50h1v1h-1zM498 50h1v1h-1zM505 50h1v1h-1zM466 51h1v1h-1zM484 51h1v1h-1zM497 51h1v1h-1zM505 51h1v1h-1zM425 52h1v1h-1zM465 52h1v1h-1zM485 52h1v1h-1zM496 52h1v1h-1zM506 52h1v1h-1zM424 53h1v1h-1zM426 53h1v1h-1zM464 53h1v1h-1zM485 53h1v1h-1zM495 53h1v1h-1zM506 53h1v1h-1zM424 54h1v1h-1zM427 54h1v1h-1zM450 54h2v1h-2zM464 54h1v1h-1zM485 54h1v1h-1zM492 54h3v1h-3zM506 54h1v1h-1zM423 55h1v1h-1zM427 55h1v1h-1zM447 55h3v1h-3zM452 55h2v1h-2zM463 55h1v1h-1zM486 55h1v1h-1zM488 55h4v1h-4zM507 55h1v1h-1zM422 56h1v1h-1zM428 56h1v1h-1zM445 56h2v1h-2zM454 56h1v1h-1zM462 56h1v1h-1zM486 56h2v1h-2zM507 56h1v1h-1zM422 57h1v1h-1zM429 57h1v1h-1zM443 57h2v1h-2zM455 57h2v1h-2zM462 57h1v1h-1zM507 57h1v1h-1zM421 58h1v1h-1zM430 58h1v1h-1zM441 58h2v1h-2zM457 58h1v1h-1zM461 58h1v1h-1zM508 58h1v1h-1zM420 59h1v1h-1zM431 59h1v1h-1zM440 59h1v1h-1zM458 59h2v1h-2zM461 59h1v1h-1zM508 59h1v1h-1zM420 60h1v1h-1zM432 60h1v1h-1zM438 60h2v1h-2zM460 60h1v1h-1zM508 60h1v1h-1zM419 61h1v1h-1zM432 61h1v1h-1zM437 61h1v1h-1zM509 61h1v1h-1zM408 62h3v1h-3zM418 62h1v1h-1zM433 62h1v1h-1zM435 62h2v1h-2zM509 62h1v1h-1zM408 63h1v1h-1zM411 63h4v1h-4zM418 63h1v1h-1zM434 63h1v1h-1zM509 63h1v1h-1zM407 64h1v1h-1zM415 64h3v1h-3zM510 64h1v1h-1zM407 65h1v1h-1zM510 65h1v1h-1zM407 66h1v1h-1zM511 66h1v1h-1zM406 67h1v1h-1zM511 67h1v1h-1zM406 68h1v1h-1zM511 68h1v1h-1zM365 69h1v1h-1zM406 69h1v1h-1zM512 69h1v1h-1zM364 70h2v1h-2zM406 70h1v1h-1zM512 70h2v1h-2zM364 71h1v1h-1zM366 71h1v1h-1zM405 71h1v1h-1zM514 71h2v1h-2zM330 72h1v1h-1zM363 72h1v1h-1zM366 72h1v1h-1zM405 72h1v1h-1zM516 72h3v1h-3zM329 73h1v1h-1zM331 73h2v1h-2zM362 73h1v1h-1zM367 73h1v1h-1zM405 73h1v1h-1zM519 73h2v1h-2zM329 74h1v1h-1zM333 74h1v1h-1zM362 74h1v1h-1zM367 74h1v1h-1zM404 74h1v1h-1zM328 75h1v1h-1zM334 75h2v1h-2zM361 75h1v1h-1zM368 75h1v1h-1zM404 75h1v1h-1zM328 76h1v1h-1zM336 76h1v1h-1zM361 76h1v1h-1zM368 76h1v1h-1zM404 76h1v1h-1zM327 77h1v1h-1zM337 77h2v1h-2zM360 77h1v1h-1zM369 77h1v1h-1zM403 77h1v1h-1zM326 78h1v1h-1zM339 78h1v1h-1zM359 78h1v1h-1zM369 78h1v1h-1zM403 78h1v1h-1zM326 79h1v1h-1zM340 79h1v1h-1zM359 79h1v1h-1zM370 79h1v1h-1zM403 79h1v1h-1zM325 80h1v1h-1zM341 80h1v1h-1zM358 80h1v1h-1zM370 80h1v1h-1zM382 80h1v1h-1zM402 80h1v1h-1zM325 81h1v1h-1zM342 81h1v1h-1zM357 81h1v1h-1zM371 81h1v1h-1zM380 81h2v1h-2zM383 81h1v1h-1zM402 81h1v1h-1zM324 82h1v1h-1zM343 82h1v1h-1zM357 82h1v1h-1zM371 82h1v1h-1zM379 82h1v1h-1zM384 82h1v1h-1zM402 82h1v1h-1zM313 83h1v1h-1zM323 83h1v1h-1zM343 83h1v1h-1zM355 83h2v1h-2zM372 83h1v1h-1zM377 83h2v1h-2zM385 83h1v1h-1zM401 83h1v1h-1zM313 84h3v1h-3zM323 84h1v1h-1zM344 84h1v1h-1zM353 84h2v1h-2zM372 84h1v1h-1zM376 84h1v1h-1zM386 84h2v1h-2zM401 84h1v1h-1zM312 85h1v1h-1zM316 85h2v1h-2zM322 85h1v1h-1zM345 85h1v1h-1zM351 85h2v1h-2zM373 85h3v1h-3zM388 85h1v1h-1zM401 85h1v1h-1zM312 86h1v1h-1zM318 86h2v1h-2zM322 86h1v1h-1zM346 86h1v1h-1zM349 86h2v1h-2zM373 86h1v1h-1zM389 86h1v1h-1zM401 86h1v1h-1zM312 87h1v1h-1zM320 87h2v1h-2zM347 87h2v1h-2zM390 87h1v1h-1zM400 87h1v1h-1zM311 88h1v1h-1zM391 88h2v1h-2zM400 88h1v1h-1zM311 89h1v1h-1zM393 89h2v1h-2zM400 89h1v1h-1zM310 90h1v1h-1zM395 90h3v1h-3zM399 90h1v1h-1zM310 91h1v1h-1zM398 91h2v1h-2zM310 92h1v1h-1zM309 93h1v1h-1zM309 94h1v1h-1zM309 95h1v1h-1zM308 96h1v1h-1zM308 97h1v1h-1zM291 98h5v1h-5zM307 98h1v1h-1zM287 99h4v1h-4zM296 99h1v1h-1zM307 99h1v1h-1zM286 100h1v1h-1zM297 100h1v1h-1zM307 100h1v1h-1zM284 101h2v1h-2zM298 101h1v1h-1zM306 101h1v1h-1zM283 102h1v1h-1zM299 102h1v1h-1zM306 102h1v1h-1zM282 103h1v1h-1zM300 103h1v1h-1zM306 103h1v1h-1zM280 104h2v1h-2zM301 104h1v1h-1zM305 104h1v1h-1zM279 105h1v1h-1zM302 105h1v1h-1zM305 105h1v1h-1zM278 106h1v1h-1zM303 106h2v1h-2zM278 107h1v1h-1zM304 107h1v1h-1zM277 108h1v1h-1zM277 109h1v1h-1zM277 110h1v1h-1zM276 111h1v1h-1zM276 112h1v1h-1zM275 113h1v1h-1zM275 114h1v1h-1zM275 115h1v1h-1zM274 116h1v1h-1zM274 117h1v1h-1zM274 118h1v1h-1zM273 119h1v1h-1zM273 120h1v1h-1zM272 121h1v1h-1zM272 122h1v1h-1zM272 123h1v1h-1zM271 124h1v1h-1zM271 125h1v1h-1zM271 126h1v1h-1zM270 127h1v1h-1zM270 128h1v1h-1zM269 129h1v1h-1zM269 130h1v1h-1zM268 131h1v1h-1zM268 132h1v1h-1zM267 133h1v1h-1zM267 134h1v1h-1zM266 135h1v1h-1zM265 136h1v1h-1zM265 137h1v1h-1zM264 138h1v1h-1zM263 139h1v1h-1zM263 140h1v1h-1zM252 141h3v1h-3zM262 141h1v1h-1zM251 142h1v1h-1zM255 142h4v1h-4zM262 142h1v1h-1zM249 143h2v1h-2zM259 143h3v1h-3zM248 144h1v1h-1zM247 145h1v1h-1zM245 146h2v1h-2zM244 147h1v1h-1zM243 148h1v1h-1zM241 149h2v1h-2zM239 150h2v1h-2zM238 151h1v1h-1zM236 152h2v1h-2zM235 153h1v1h-1zM235 154h1v1h-1zM234 155h1v1h-1zM234 156h1v1h-1zM233 157h1v1h-1zM233 158h1v1h-1zM232 159h1v1h-1zM232 160h1v1h-1zM231 161h1v1h-1zM231 162h1v1h-1zM231 163h1v1h-1zM230 164h1v1h-1zM230 165h1v1h-1zM229 166h1v1h-1zM229 167h1v1h-1zM228 168h1v1h-1zM228 169h1v1h-1zM227 170h1v1h-1zM227 171h1v1h-1zM226 172h1v1h-1zM226 173h1v1h-1zM225 174h1v1h-1zM225 175h1v1h-1zM224 176h1v1h-1zM223 177h1v1h-1zM113 178h2v1h-2zM223 178h1v1h-1zM110 179h3v1h-3zM114 179h1v1h-1zM222 179h1v1h-1zM94 180h7v1h-7zM107 180h3v1h-3zM115 180h1v1h-1zM209 180h1v1h-1zM222 180h1v1h-1zM90 181h4v1h-4zM101 181h6v1h-6zM115 181h1v1h-1zM208 181h1v1h-1zM210 181h1v1h-1zM221 181h1v1h-1zM87 182h3v1h-3zM116 182h1v1h-1zM208 182h1v1h-1zM211 182h1v1h-1zM220 182h1v1h-1zM85 183h2v1h-2zM116 183h1v1h-1zM207 183h1v1h-1zM212 183h1v1h-1zM220 183h1v1h-1zM70 184h3v1h-3zM83 184h2v1h-2zM117 184h1v1h-1zM206 184h1v1h-1zM213 184h2v1h-2zM219 184h1v1h-1zM70 185h1v1h-1zM73 185h4v1h-4zM81 185h2v1h-2zM117 185h1v1h-1zM206 185h1v1h-1zM215 185h1v1h-1zM218 185h1v1h-1zM69 186h1v1h-1zM77 186h4v1h-4zM118 186h1v1h-1zM205 186h1v1h-1zM216 186h1v1h-1zM218 186h1v1h-1zM69 187h1v1h-1zM118 187h1v1h-1zM204 187h1v1h-1zM217 187h1v1h-1zM68 188h1v1h-1zM118 188h1v1h-1zM203 188h1v1h-1zM68 189h1v1h-1zM119 189h1v1h-1zM203 189h1v1h-1zM68 190h1v1h-1zM119 190h1v1h-1zM202 190h1v1h-1zM67 191h1v1h-1zM120 191h1v1h-1zM201 191h1v1h-1zM67 192h1v1h-1zM120 192h1v1h-1zM201 192h1v1h-1zM66 193h1v1h-1zM121 193h1v1h-1zM196 193h5v1h-5zM66 194h1v1h-1zM121 194h1v1h-1zM192 194h4v1h-4zM66 195h1v1h-1zM122 195h1v1h-1zM191 195h1v1h-1zM65 196h1v1h-1zM122 196h1v1h-1zM148 196h1v1h-1zM173 196h2v1h-2zM191 196h1v1h-1zM65 197h1v1h-1zM123 197h1v1h-1zM147 197h1v1h-1zM149 197h2v1h-2zM171 197h2v1h-2zM175 197h1v1h-1zM190 197h1v1h-1zM64 198h1v1h-1zM124 198h1v1h-1zM147 198h1v1h-1zM151 198h1v1h-1zM169 198h2v1h-2zM176 198h1v1h-1zM189 198h1v1h-1zM64 199h1v1h-1zM124 199h1v1h-1zM146 199h1v1h-1zM152 199h2v1h-2zM167 199h2v1h-2zM176 199h1v1h-1zM189 199h1v1h-1zM64 200h1v1h-1zM125 200h1v1h-1zM146 200h1v1h-1zM154 200h1v1h-1zM164 200h3v1h-3zM177 200h1v1h-1zM188 200h1v1h-1zM63 201h1v1h-1zM126 201h1v1h-1zM145 201h1v1h-1zM155 201h2v1h-2zM160 201h4v1h-4zM178 201h1v1h-1zM187 201h1v1h-1zM63 202h1v1h-1zM127 202h1v1h-1zM145 202h1v1h-1zM157 202h3v1h-3zM179 202h1v1h-1zM186 202h1v1h-1zM62 203h1v1h-1zM128 203h1v1h-1zM144 203h1v1h-1zM180 203h1v1h-1zM186 203h1v1h-1zM62 204h1v1h-1zM129 204h1v1h-1zM144 204h1v1h-1zM181 204h1v1h-1zM185 204h1v1h-1zM61 205h1v1h-1zM129 205h1v1h-1zM143 205h1v1h-1zM181 205h1v1h-1zM184 205h1v1h-1zM60 206h1v1h-1zM130 206h1v1h-1zM143 206h1v1h-1zM182 206h1v1h-1zM184 206h1v1h-1zM59 207h1v1h-1zM131 207h2v1h-2zM142 207h1v1h-1zM183 207h1v1h-1zM58 208h1v1h-1zM133 208h2v1h-2zM142 208h1v1h-1zM57 209h1v1h-1zM135 209h2v1h-2zM141 209h1v1h-1zM56 210h1v1h-1zM137 210h2v1h-2zM141 210h1v1h-1zM55 211h1v1h-1zM139 211h2v1h-2zM54 212h1v1h-1zM53 213h1v1h-1zM52 214h1v1h-1zM51 215h1v1h-1zM51 216h1v1h-1zM50 217h1v1h-1zM36 218h1v1h-1zM49 218h1v1h-1zM34 219h2v1h-2zM37 219h1v1h-1zM48 219h1v1h-1zM32 220h2v1h-2zM38 220h2v1h-2zM47 220h1v1h-1zM30 221h2v1h-2zM40 221h1v1h-1zM46 221h1v1h-1zM28 222h2v1h-2zM41 222h1v1h-1zM46 222h1v1h-1zM27 223h1v1h-1zM42 223h2v1h-2zM45 223h1v1h-1zM27 224h1v1h-1zM44 224h1v1h-1zM26 225h1v1h-1zM26 226h1v1h-1zM25 227h1v1h-1zM25 228h1v1h-1zM24 229h1v1h-1zM24 230h1v1h-1zM10 231h1v1h-1zM23 231h1v1h-1zM11 232h1v1h-1zM23 232h1v1h-1zM12 233h1v1h-1zM22 233h1v1h-1zM12 234h1v1h-1zM22 234h1v1h-1zM13 235h1v1h-1zM21 235h1v1h-1zM14 236h1v1h-1zM21 236h1v1h-1zM15 237h1v1h-1zM20 237h1v1h-1zM16 238h1v1h-1zM20 238h1v1h-1zM16 239h1v1h-1zM19 239h1v1h-1zM17 240h1v1h-1zM19 240h1v1h-1zM18 241h1v1h-1z" fill="#000080"/><path d="M481 0h1v1h-1zM506 0h1v1h-1zM480 1h1v1h-1zM506 1h1v1h-1zM479 2h1v1h-1zM506 2h1v1h-1zM478 3h1v1h-1zM507 3h1v1h-1zM477 4h1v1h-1zM507 4h1v1h-1zM476 5h1v1h-1zM507 5h1v1h-1zM476 6h1v1h-1zM508 6h1v1h-1zM475 7h1v1h-1zM508 7h1v1h-1zM475 8h1v1h-1zM508 8h1v1h-1zM474 9h1v1h-1zM509 9h1v1h-1zM474 10h1v1h-1zM509 10h1v1h-1zM473 11h1v1h-1zM509 11h1v1h-1zM473 12h1v1h-1zM510 12h1v1h-1zM472 13h1v1h-1zM510 13h1v1h-1zM471 14h1v1h-1zM511 14h1v1h-1zM471 15h1v1h-1zM511 15h1v1h-1zM519 15h2v1h-2zM470 16h1v1h-1zM511 16h1v1h-1zM516 16h3v1h-3zM470 17h1v1h-1zM512 17h1v1h-1zM514 17h2v1h-2zM469 18h1v1h-1zM512 18h2v1h-2zM469 19h1v1h-1zM468 20h1v1h-1zM467 21h1v1h-1zM443 22h2v1h-2zM467 22h1v1h-1zM425 23h1v1h-1zM441 23h2v1h-2zM445 23h2v1h-2zM466 23h1v1h-1zM424 24h1v1h-1zM426 24h2v1h-2zM440 24h1v1h-1zM447 24h3v1h-3zM465 24h1v1h-1zM424 25h1v1h-1zM428 25h2v1h-2zM438 25h2v1h-2zM450 25h2v1h-2zM464 25h1v1h-1zM423 26h1v1h-1zM430 26h2v1h-2zM437 26h1v1h-1zM452 26h2v1h-2zM464 26h1v1h-1zM423 27h1v1h-1zM432 27h2v1h-2zM435 27h2v1h-2zM454 27h1v1h-1zM463 27h1v1h-1zM422 28h1v1h-1zM434 28h1v1h-1zM455 28h2v1h-2zM462 28h1v1h-1zM422 29h1v1h-1zM457 29h1v1h-1zM461 29h1v1h-1zM421 30h1v1h-1zM458 30h2v1h-2zM461 30h1v1h-1zM421 31h1v1h-1zM460 31h1v1h-1zM420 32h1v1h-1zM420 33h1v1h-1zM408 34h2v1h-2zM419 34h1v1h-1zM408 35h1v1h-1zM410 35h2v1h-2zM419 35h1v1h-1zM407 36h1v1h-1zM412 36h2v1h-2zM418 36h1v1h-1zM407 37h1v1h-1zM414 37h2v1h-2zM418 37h1v1h-1zM407 38h1v1h-1zM416 38h2v1h-2zM407 39h1v1h-1zM406 40h1v1h-1zM406 41h1v1h-1zM406 42h1v1h-1zM406 43h1v1h-1zM405 44h1v1h-1zM405 45h1v1h-1zM405 46h1v1h-1zM405 47h1v1h-1zM404 48h1v1h-1zM404 49h1v1h-1zM404 50h1v1h-1zM404 51h1v1h-1zM403 52h1v1h-1zM403 53h1v1h-1zM403 54h1v1h-1zM403 55h1v1h-1zM402 56h1v1h-1zM330 57h1v1h-1zM402 57h1v1h-1zM329 58h1v1h-1zM331 58h1v1h-1zM402 58h1v1h-1zM327 59h2v1h-2zM332 59h1v1h-1zM402 59h1v1h-1zM326 60h1v1h-1zM333 60h1v1h-1zM401 60h1v1h-1zM325 61h1v1h-1zM334 61h2v1h-2zM401 61h1v1h-1zM323 62h2v1h-2zM336 62h1v1h-1zM401 62h1v1h-1zM322 63h1v1h-1zM337 63h1v1h-1zM401 63h1v1h-1zM320 64h2v1h-2zM338 64h1v1h-1zM400 64h1v1h-1zM318 65h2v1h-2zM339 65h1v1h-1zM400 65h1v1h-1zM316 66h2v1h-2zM340 66h1v1h-1zM365 66h1v1h-1zM382 66h5v1h-5zM400 66h1v1h-1zM314 67h2v1h-2zM341 67h1v1h-1zM364 67h1v1h-1zM366 67h1v1h-1zM381 67h1v1h-1zM387 67h6v1h-6zM400 67h1v1h-1zM313 68h1v1h-1zM342 68h1v1h-1zM363 68h1v1h-1zM367 68h1v1h-1zM380 68h1v1h-1zM393 68h4v1h-4zM399 68h1v1h-1zM313 69h1v1h-1zM343 69h1v1h-1zM362 69h1v1h-1zM368 69h1v1h-1zM379 69h1v1h-1zM397 69h3v1h-3zM312 70h1v1h-1zM343 70h1v1h-1zM361 70h1v1h-1zM369 70h1v1h-1zM378 70h1v1h-1zM312 71h1v1h-1zM344 71h1v1h-1zM360 71h1v1h-1zM369 71h1v1h-1zM377 71h1v1h-1zM312 72h1v1h-1zM345 72h1v1h-1zM359 72h1v1h-1zM370 72h1v1h-1zM376 72h1v1h-1zM311 73h1v1h-1zM346 73h1v1h-1zM358 73h1v1h-1zM371 73h1v1h-1zM375 73h1v1h-1zM311 74h1v1h-1zM347 74h5v1h-5zM357 74h1v1h-1zM372 74h1v1h-1zM374 74h1v1h-1zM311 75h1v1h-1zM352 75h5v1h-5zM373 75h1v1h-1zM310 76h1v1h-1zM310 77h1v1h-1zM310 78h1v1h-1zM309 79h1v1h-1zM309 80h1v1h-1zM287 81h1v1h-1zM309 81h1v1h-1zM286 82h1v1h-1zM288 82h1v1h-1zM309 82h1v1h-1zM286 83h1v1h-1zM289 83h1v1h-1zM308 83h1v1h-1zM285 84h1v1h-1zM290 84h1v1h-1zM308 84h1v1h-1zM285 85h1v1h-1zM291 85h1v1h-1zM308 85h1v1h-1zM284 86h1v1h-1zM292 86h1v1h-1zM307 86h1v1h-1zM284 87h1v1h-1zM293 87h1v1h-1zM307 87h1v1h-1zM283 88h1v1h-1zM294 88h1v1h-1zM307 88h1v1h-1zM283 89h1v1h-1zM295 89h1v1h-1zM306 89h1v1h-1zM282 90h1v1h-1zM296 90h1v1h-1zM306 90h1v1h-1zM282 91h1v1h-1zM297 91h2v1h-2zM306 91h1v1h-1zM281 92h1v1h-1zM299 92h1v1h-1zM305 92h1v1h-1zM281 93h1v1h-1zM300 93h1v1h-1zM305 93h1v1h-1zM280 94h1v1h-1zM301 94h2v1h-2zM305 94h1v1h-1zM280 95h1v1h-1zM303 95h2v1h-2zM279 96h1v1h-1zM304 96h1v1h-1zM279 97h1v1h-1zM278 98h1v1h-1zM278 99h1v1h-1zM277 100h1v1h-1zM277 101h1v1h-1zM276 102h1v1h-1zM276 103h1v1h-1zM275 104h1v1h-1zM275 105h1v1h-1zM274 106h1v1h-1zM274 107h1v1h-1zM273 108h1v1h-1zM273 109h1v1h-1zM272 110h1v1h-1zM272 111h1v1h-1zM271 112h1v1h-1zM271 113h1v1h-1zM270 114h1v1h-1zM270 115h1v1h-1zM269 116h1v1h-1zM268 117h1v1h-1zM267 118h1v1h-1zM267 119h1v1h-1zM266 120h1v1h-1zM265 121h1v1h-1zM264 122h1v1h-1zM263 123h1v1h-1zM252 124h3v1h-3zM263 124h1v1h-1zM250 125h2v1h-2zM255 125h4v1h-4zM262 125h1v1h-1zM249 126h1v1h-1zM259 126h3v1h-3zM247 127h2v1h-2zM235 128h2v1h-2zM246 128h1v1h-1zM234 129h1v1h-1zM237 129h4v1h-4zM244 129h2v1h-2zM234 130h1v1h-1zM241 130h3v1h-3zM233 131h1v1h-1zM232 132h1v1h-1zM232 133h1v1h-1zM231 134h1v1h-1zM231 135h1v1h-1zM230 136h1v1h-1zM229 137h1v1h-1zM229 138h1v1h-1zM228 139h1v1h-1zM227 140h1v1h-1zM227 141h1v1h-1zM226 142h1v1h-1zM225 143h1v1h-1zM224 144h1v1h-1zM224 145h1v1h-1zM223 146h1v1h-1zM222 147h1v1h-1zM221 148h1v1h-1zM220 149h1v1h-1zM219 150h1v1h-1zM219 151h1v1h-1zM218 152h1v1h-1zM216 153h2v1h-2zM214 154h2v1h-2zM212 155h2v1h-2zM210 156h2v1h-2zM96 157h2v1h-2zM209 157h1v1h-1zM94 158h2v1h-2zM98 158h2v1h-2zM207 158h2v1h-2zM92 159h2v1h-2zM100 159h2v1h-2zM112 159h3v1h-3zM192 159h1v1h-1zM206 159h1v1h-1zM91 160h1v1h-1zM102 160h2v1h-2zM108 160h4v1h-4zM115 160h1v1h-1zM174 160h1v1h-1zM191 160h1v1h-1zM193 160h2v1h-2zM204 160h2v1h-2zM89 161h2v1h-2zM104 161h4v1h-4zM115 161h1v1h-1zM172 161h2v1h-2zM175 161h1v1h-1zM190 161h1v1h-1zM195 161h2v1h-2zM203 161h1v1h-1zM87 162h2v1h-2zM116 162h1v1h-1zM171 162h1v1h-1zM176 162h1v1h-1zM189 162h1v1h-1zM197 162h2v1h-2zM201 162h2v1h-2zM85 163h2v1h-2zM117 163h1v1h-1zM170 163h1v1h-1zM177 163h1v1h-1zM188 163h1v1h-1zM199 163h2v1h-2zM83 164h2v1h-2zM118 164h1v1h-1zM168 164h2v1h-2zM178 164h2v1h-2zM187 164h1v1h-1zM81 165h2v1h-2zM118 165h1v1h-1zM167 165h1v1h-1zM180 165h1v1h-1zM186 165h1v1h-1zM77 166h4v1h-4zM119 166h1v1h-1zM148 166h2v1h-2zM165 166h2v1h-2zM181 166h1v1h-1zM185 166h1v1h-1zM73 167h4v1h-4zM120 167h1v1h-1zM147 167h1v1h-1zM150 167h2v1h-2zM163 167h2v1h-2zM182 167h1v1h-1zM184 167h1v1h-1zM70 168h3v1h-3zM121 168h1v1h-1zM147 168h1v1h-1zM152 168h2v1h-2zM161 168h2v1h-2zM183 168h1v1h-1zM69 169h1v1h-1zM121 169h1v1h-1zM146 169h1v1h-1zM154 169h2v1h-2zM159 169h2v1h-2zM68 170h1v1h-1zM122 170h1v1h-1zM145 170h1v1h-1zM156 170h3v1h-3zM68 171h1v1h-1zM123 171h2v1h-2zM144 171h1v1h-1zM67 172h1v1h-1zM125 172h2v1h-2zM144 172h1v1h-1zM66 173h1v1h-1zM127 173h2v1h-2zM143 173h1v1h-1zM65 174h1v1h-1zM129 174h2v1h-2zM142 174h1v1h-1zM64 175h1v1h-1zM131 175h3v1h-3zM141 175h1v1h-1zM64 176h1v1h-1zM134 176h4v1h-4zM141 176h1v1h-1zM63 177h1v1h-1zM138 177h3v1h-3zM62 178h1v1h-1zM61 179h1v1h-1zM60 180h1v1h-1zM59 181h1v1h-1zM58 182h1v1h-1zM58 183h1v1h-1zM57 184h1v1h-1zM56 185h1v1h-1zM55 186h1v1h-1zM54 187h1v1h-1zM53 188h1v1h-1zM51 189h2v1h-2zM50 190h1v1h-1zM48 191h2v1h-2zM47 192h1v1h-1zM45 193h2v1h-2zM35 194h10v1h-10zM33 195h2v1h-2zM31 196h2v1h-2zM29 197h2v1h-2zM27 198h2v1h-2zM26 199h1v1h-1zM25 200h1v1h-1zM24 201h1v1h-1zM23 202h1v1h-1zM10 203h1v1h-1zM22 203h1v1h-1zM11 204h2v1h-2zM21 204h1v1h-1zM13 205h2v1h-2zM20 205h1v1h-1zM15 206h2v1h-2zM19 206h1v1h-1zM17 207h2v1h-2z" fill="#66cc00"/><line x1="0" y1="323.5" x2="538" y2="323.5" stroke="#808080" stroke-width="1"/><line x1="10.5" y1="324" x2="10.5" y2="328" stroke="#808080" stroke-width="1"/><line x1="96.5" y1="324" x2="96.5" y2="328" stroke="#808080" stroke-width="1"/><line x1="122.5" y1="324" x2="122.5" y2="328" stroke="#808080" stroke-width="1"/><line x1="174.5" y1="324" x2="174.5" y2="328" stroke="#808080" stroke-width="1"/><line x1="252.5" y1="324" x2="252.5" y2="328" stroke="#808080" stroke-width="1"/><line x1="278.5" y1="324" x2="278.5" y2="328" stroke="#808080" stroke-width="1"/><line x1="330.5" y1="324" x2="330.5" y2="328" stroke="#808080" stroke-width="1"/><line x1="425.5" y1="324" x2="425.5" y2="328" stroke="#808080" stroke-width="1"/><line x1="451.5" y1="324" x2="451.5" y2="328" stroke="#808080" stroke-width="1"/></svg><svg style="position:absolute;left:0;top:0" width="978" height="673" shape-rendering="crispEdges"><defs><path id="g0" d="M2 0h3v1h-3zM9 0h1v1h-1zM1 1h1v1h-1zM5 1h1v1h-1zM9 1h1v1h-1zM1 2h1v1h-1zM5 2h1v1h-1zM9 2h1v1h-1zM1 3h1v1h-1zM5 3h1v1h-1zM9 3h1v1h-1zM2 4h3v1h-3zM9 4h1v1h-1zM9 5h1v1h-1zM1 6h9v1h-9zM9 7h1v1h-1zM1 8h9v1h-9zM1 9h1v1h-1zM1 10h9v1h-9z"/><path id="g1" d="M1 0h8v1h-8zM4 1h1v1h-1zM8 1h1v1h-1zM4 2h1v1h-1zM8 2h1v1h-1zM4 3h1v1h-1zM8 3h1v1h-1zM4 4h1v1h-1zM8 4h1v1h-1zM3 5h2v1h-2zM8 5h3v1h-3zM3 6h1v1h-1zM5 6h1v1h-1zM8 6h1v1h-1zM2 7h1v1h-1zM5 7h1v1h-1zM8 7h1v1h-1zM2 8h1v1h-1zM6 8h1v1h-1zM8 8h1v1h-1zM1 9h1v1h-1zM7 9h2v1h-2zM8 10h1v1h-1z"/><path id="g2" d="M1 0h9v1h-9zM9 1h1v1h-1zM9 2h1v1h-1zM9 3h1v1h-1zM0 4h11v1h-11zM5 5h1v1h-1zM5 6h1v1h-1zM1 7h9v1h-9zM9 8h1v1h-1zM9 9h1v1h-1zM9 10h1v1h-1z"/><path id="g3" d="M1 0h9v1h-9zM9 1h1v1h-1zM9 2h1v1h-1zM9 3h1v1h-1zM9 4h1v1h-1zM4 5h1v1h-1zM9 5h1v1h-1zM4 6h1v1h-1zM9 6h1v1h-1zM4 7h1v1h-1zM8 7h1v1h-1zM4 8h1v1h-1zM0 9h11v1h-11z"/><path id="g4" d="M2 0h1v1h-1zM1 1h2v1h-2zM2 2h1v1h-1zM2 3h1v1h-1zM2 4h1v1h-1zM2 5h1v1h-1zM2 6h1v1h-1zM2 7h1v1h-1zM2 8h1v1h-1zM2 9h1v1h-1z"/><path id="g5" d="M0 0h1v1h-1zM6 0h1v1h-1zM0 1h1v1h-1zM6 1h1v1h-1zM1 2h1v1h-1zM5 2h1v1h-1zM1 3h1v1h-1zM5 3h1v1h-1zM2 4h1v1h-1zM4 4h1v1h-1zM2 5h1v1h-1zM4 5h1v1h-1zM3 6h1v1h-1zM3 7h1v1h-1zM3 8h1v1h-1zM3 9h1v1h-1z"/><path id="g6" d="M1 0h3v1h-3zM0 1h1v1h-1zM4 1h1v1h-1zM0 2h1v1h-1zM4 2h1v1h-1zM4 3h1v1h-1zM3 4h1v1h-1zM2 5h1v1h-1zM1 6h1v1h-1zM0 7h1v1h-1zM0 8h1v1h-1zM0 9h5v1h-5z"/><path id="g7" d="M1 0h3v1h-3zM0 1h1v1h-1zM4 1h1v1h-1zM4 2h1v1h-1zM4 3h1v1h-1zM1 4h3v1h-3zM4 5h1v1h-1zM4 6h1v1h-1zM4 7h1v1h-1zM0 8h1v1h-1zM4 8h1v1h-1zM1 9h3v1h-3z"/><path id="g8" d="M0 0h5v1h-5zM0 1h1v1h-1zM0 2h1v1h-1zM0 3h1v1h-1zM0 4h4v1h-4zM4 5h1v1h-1zM4 6h1v1h-1zM4 7h1v1h-1zM0 8h1v1h-1zM4 8h1v1h-1zM1 9h3v1h-3z"/><path id="g9" d="M1 0h3v1h-3zM0 1h1v1h-1zM4 1h1v1h-1zM0 2h1v1h-1zM4 2h1v1h-1zM0 3h1v1h-1zM4 3h1v1h-1zM0 4h1v1h-1zM4 4h1v1h-1zM0 5h1v1h-1zM4 5h1v1h-1zM0 6h1v1h-1zM4 6h1v1h-1zM0 7h1v1h-1zM4 7h1v1h-1zM0 8h1v1h-1zM4 8h1v1h-1zM1 9h3v1h-3z"/><path id="g10" d="M1 0h9v1h-9zM5 1h1v1h-1zM5 2h1v1h-1zM3 3h2v1h-2zM6 3h2v1h-2zM1 4h2v1h-2zM8 4h2v1h-2zM0 6h11v1h-11zM5 7h1v1h-1zM5 8h1v1h-1zM5 9h1v1h-1zM5 10h1v1h-1z"/><path id="g11" d="M1 0h9v1h-9zM5 1h1v1h-1zM3 2h2v1h-2zM6 2h2v1h-2zM1 3h2v1h-2zM8 3h2v1h-2zM5 4h1v1h-1zM0 5h11v1h-11zM2 7h7v1h-7zM1 8h1v1h-1zM9 8h1v1h-1zM1 9h1v1h-1zM9 9h1v1h-1zM2 10h7v1h-7z"/><path id="g12" d="M1 0h9v1h-9zM1 1h1v1h-1zM1 2h9v1h-9zM1 3h9v1h-9zM5 4h1v1h-1zM0 5h11v1h-11zM2 7h7v1h-7zM1 8h1v1h-1zM9 8h1v1h-1zM1 9h1v1h-1zM9 9h1v1h-1zM2 10h7v1h-7z"/><path id="g13" d="M2 0h3v1h-3zM8 0h1v1h-1zM1 1h1v1h-1zM5 1h1v1h-1zM8 1h1v1h-1zM1 2h1v1h-1zM5 2h1v1h-1zM8 2h1v1h-1zM1 3h1v1h-1zM5 3h1v1h-1zM8 3h1v1h-1zM1 4h1v1h-1zM5 4h1v1h-1zM8 4h3v1h-3zM2 5h3v1h-3zM8 5h1v1h-1zM8 6h1v1h-1zM1 7h1v1h-1zM8 7h1v1h-1zM1 8h1v1h-1zM1 9h9v1h-9z"/><path id="g14" d="M1 0h3v1h-3zM0 1h1v1h-1zM4 1h1v1h-1zM0 2h1v1h-1zM4 2h1v1h-1zM0 3h1v1h-1zM4 3h1v1h-1zM0 4h1v1h-1zM4 4h1v1h-1zM1 5h4v1h-4zM4 6h1v1h-1zM4 7h1v1h-1zM0 8h1v1h-1zM4 8h1v1h-1zM1 9h3v1h-3z"/><path id="g15" d="M2 0h4v1h-4zM8 0h1v1h-1zM0 1h7v1h-7zM8 1h1v1h-1zM8 2h1v1h-1zM2 3h4v1h-4zM8 3h1v1h-1zM1 4h1v1h-1zM6 4h1v1h-1zM8 4h3v1h-3zM1 5h1v1h-1zM6 5h1v1h-1zM8 5h1v1h-1zM2 6h4v1h-4zM8 6h1v1h-1zM1 7h1v1h-1zM8 7h1v1h-1zM1 8h1v1h-1zM1 9h9v1h-9z"/><path id="g16" d="M1 0h7v1h-7zM9 0h1v1h-1zM4 1h1v1h-1zM9 1h1v1h-1zM4 2h1v1h-1zM9 2h1v1h-1zM4 3h1v1h-1zM6 3h4v1h-4zM3 4h1v1h-1zM5 4h1v1h-1zM9 4h1v1h-1zM2 5h1v1h-1zM6 5h1v1h-1zM9 5h1v1h-1zM1 6h1v1h-1zM7 6h1v1h-1zM9 6h1v1h-1zM1 7h1v1h-1zM9 7h1v1h-1zM1 8h1v1h-1zM1 9h9v1h-9z"/><path id="g17" d="M3 0h1v1h-1zM8 0h1v1h-1zM3 1h1v1h-1zM8 1h1v1h-1zM3 2h1v1h-1zM8 2h1v1h-1zM2 3h1v1h-1zM4 3h1v1h-1zM8 3h1v1h-1zM2 4h1v1h-1zM5 4h1v1h-1zM8 4h3v1h-3zM1 5h1v1h-1zM6 5h1v1h-1zM8 5h1v1h-1zM0 6h1v1h-1zM6 6h1v1h-1zM8 6h1v1h-1zM1 7h1v1h-1zM8 7h1v1h-1zM1 8h1v1h-1zM1 9h9v1h-9z"/><path id="g18" d="M1 0h9v1h-9zM9 1h1v1h-1zM9 2h1v1h-1zM9 3h1v1h-1zM0 4h11v1h-11zM1 7h9v1h-9zM1 8h1v1h-1zM9 8h1v1h-1zM1 9h9v1h-9z"/><path id="g19" d="M2 0h4v1h-4zM9 0h1v1h-1zM9 1h1v1h-1zM1 2h6v1h-6zM9 2h1v1h-1zM2 3h4v1h-4zM9 3h1v1h-1zM1 4h1v1h-1zM6 4h1v1h-1zM9 4h1v1h-1zM1 5h1v1h-1zM6 5h1v1h-1zM9 5h1v1h-1zM2 6h4v1h-4zM9 6h1v1h-1zM4 7h1v1h-1zM9 7h1v1h-1zM4 8h1v1h-1zM7 8h3v1h-3zM0 9h8v1h-8zM9 9h1v1h-1zM9 10h1v1h-1z"/><path id="g20" d="M3 0h1v1h-1zM8 0h1v1h-1zM3 1h1v1h-1zM8 1h1v1h-1zM3 2h1v1h-1zM8 2h1v1h-1zM3 3h1v1h-1zM8 3h1v1h-1zM2 4h2v1h-2zM8 4h1v1h-1zM2 5h1v1h-1zM4 5h1v1h-1zM8 5h3v1h-3zM2 6h1v1h-1zM5 6h1v1h-1zM8 6h1v1h-1zM1 7h1v1h-1zM5 7h1v1h-1zM8 7h1v1h-1zM0 8h2v1h-2zM6 8h1v1h-1zM8 8h1v1h-1zM0 9h1v1h-1zM6 9h1v1h-1zM8 9h1v1h-1zM8 10h1v1h-1z"/><path id="g21" d="M3 0h1v1h-1zM3 1h1v1h-1zM2 2h1v1h-1zM4 2h1v1h-1zM2 3h1v1h-1zM4 3h1v1h-1zM1 4h1v1h-1zM5 4h1v1h-1zM1 5h1v1h-1zM5 5h1v1h-1zM1 6h5v1h-5zM0 7h1v1h-1zM6 7h1v1h-1zM0 8h1v1h-1zM6 8h1v1h-1zM0 9h1v1h-1zM6 9h1v1h-1z"/><path id="g22" d="M0 5h5v1h-5z"/><path id="g23" d="M0 0h5v1h-5zM0 1h1v1h-1zM5 1h1v1h-1zM0 2h1v1h-1zM5 2h1v1h-1zM0 3h1v1h-1zM5 3h1v1h-1zM0 4h5v1h-5zM0 5h1v1h-1zM5 5h1v1h-1zM0 6h1v1h-1zM5 6h1v1h-1zM0 7h1v1h-1zM5 7h1v1h-1zM0 8h1v1h-1zM5 8h1v1h-1zM0 9h5v1h-5z"/><path id="g24" d="M2 0h4v1h-4zM1 1h1v1h-1zM6 1h1v1h-1zM0 2h1v1h-1zM0 3h1v1h-1zM0 4h1v1h-1zM0 5h1v1h-1zM0 6h1v1h-1zM0 7h1v1h-1zM1 8h1v1h-1zM6 8h1v1h-1zM2 9h4v1h-4z"/><path id="g25" d="M0 0h4v1h-4zM0 1h1v1h-1zM4 1h1v1h-1zM0 2h1v1h-1zM5 2h1v1h-1zM0 3h1v1h-1zM5 3h1v1h-1zM0 4h1v1h-1zM5 4h1v1h-1zM0 5h1v1h-1zM5 5h1v1h-1zM0 6h1v1h-1zM5 6h1v1h-1zM0 7h1v1h-1zM5 7h1v1h-1zM0 8h1v1h-1zM4 8h1v1h-1zM0 9h4v1h-4z"/><path id="g26" d="M0 0h5v1h-5zM0 1h1v1h-1zM5 1h1v1h-1zM0 2h1v1h-1zM5 2h1v1h-1zM0 3h1v1h-1zM5 3h1v1h-1zM0 4h1v1h-1zM5 4h1v1h-1zM0 5h5v1h-5zM0 6h1v1h-1zM0 7h1v1h-1zM0 8h1v1h-1zM0 9h1v1h-1z"/><path id="g27" d="M4 0h1v1h-1zM4 1h1v1h-1zM3 2h1v1h-1zM3 3h1v1h-1zM2 4h1v1h-1zM2 5h1v1h-1zM1 6h1v1h-1zM1 7h1v1h-1zM0 8h1v1h-1zM0 9h1v1h-1zM-1 10h1v1h-1zM-1 11h1v1h-1z"/><path id="g28" d="M0 0h5v1h-5zM4 1h1v1h-1zM4 2h1v1h-1zM3 3h1v1h-1zM3 4h1v1h-1zM3 5h1v1h-1zM2 6h1v1h-1zM2 7h1v1h-1zM2 8h1v1h-1zM2 9h1v1h-1z"/><path id="g29" d="M1 0h3v1h-3zM0 1h1v1h-1zM4 1h1v1h-1zM0 2h1v1h-1zM0 3h1v1h-1zM0 4h4v1h-4zM0 5h1v1h-1zM4 5h1v1h-1zM0 6h1v1h-1zM4 6h1v1h-1zM0 7h1v1h-1zM4 7h1v1h-1zM0 8h1v1h-1zM4 8h1v1h-1zM1 9h3v1h-3z"/><path id="g30" d="M0 9h1v1h-1zM0 10h1v1h-1z"/><path id="g31" d="M1 0h3v1h-3zM0 1h1v1h-1zM4 1h1v1h-1zM0 2h1v1h-1zM4 2h1v1h-1zM0 3h1v1h-1zM4 3h1v1h-1zM1 4h3v1h-3zM0 5h1v1h-1zM4 5h1v1h-1zM0 6h1v1h-1zM4 6h1v1h-1zM0 7h1v1h-1zM4 7h1v1h-1zM0 8h1v1h-1zM4 8h1v1h-1zM1 9h3v1h-3z"/><path id="g32" d="M3 0h1v1h-1zM2 1h2v1h-2zM2 2h2v1h-2zM1 3h1v1h-1zM3 3h1v1h-1zM1 4h1v1h-1zM3 4h1v1h-1zM0 5h1v1h-1zM3 5h1v1h-1zM0 6h1v1h-1zM3 6h1v1h-1zM0 7h5v1h-5zM3 8h1v1h-1zM3 9h1v1h-1z"/><path id="g33" d="M3 0h1v1h-1zM9 0h1v1h-1zM3 1h1v1h-1zM9 1h1v1h-1zM3 2h1v1h-1zM9 2h1v1h-1zM3 3h1v1h-1zM9 3h1v1h-1zM2 4h2v1h-2zM9 4h1v1h-1zM2 5h1v1h-1zM4 5h1v1h-1zM9 5h1v1h-1zM2 6h1v1h-1zM5 6h1v1h-1zM9 6h1v1h-1zM1 7h1v1h-1zM5 7h1v1h-1zM9 7h1v1h-1zM0 8h2v1h-2zM6 8h1v1h-1zM9 8h1v1h-1zM0 9h1v1h-1zM6 9h1v1h-1zM9 9h1v1h-1zM9 10h1v1h-1z"/><path id="g34" d="M1 0h1v1h-1zM9 0h1v1h-1zM1 1h9v1h-9zM1 2h1v1h-1zM9 2h1v1h-1zM1 3h9v1h-9zM0 5h11v1h-11zM5 6h1v1h-1zM1 7h1v1h-1zM5 7h1v1h-1zM1 8h1v1h-1zM1 9h9v1h-9z"/><path id="g35" d="M1 0h4v1h-4zM9 0h1v1h-1zM5 1h1v1h-1zM9 1h1v1h-1zM5 2h1v1h-1zM9 2h1v1h-1zM5 3h1v1h-1zM9 3h1v1h-1zM5 4h1v1h-1zM9 4h1v1h-1zM4 5h2v1h-2zM9 5h1v1h-1zM4 6h1v1h-1zM9 6h1v1h-1zM2 7h2v1h-2zM9 7h1v1h-1zM0 8h3v1h-3zM9 8h1v1h-1zM9 9h1v1h-1zM9 10h1v1h-1z"/><path id="g36" d="M1 0h4v1h-4zM7 0h1v1h-1zM9 0h1v1h-1zM1 1h1v1h-1zM7 1h1v1h-1zM9 1h1v1h-1zM1 2h1v1h-1zM7 2h1v1h-1zM9 2h1v1h-1zM1 3h1v1h-1zM7 3h1v1h-1zM9 3h1v1h-1zM1 4h1v1h-1zM7 4h1v1h-1zM9 4h1v1h-1zM1 5h1v1h-1zM7 5h3v1h-3zM1 6h1v1h-1zM7 6h1v1h-1zM9 6h1v1h-1zM1 7h1v1h-1zM7 7h1v1h-1zM9 7h1v1h-1zM1 8h1v1h-1zM5 8h1v1h-1zM7 8h1v1h-1zM9 8h1v1h-1zM1 9h4v1h-4zM7 9h1v1h-1zM9 9h1v1h-1zM7 10h1v1h-1zM9 10h1v1h-1z"/><path id="g37" d="M1 0h1v1h-1zM5 0h1v1h-1zM9 0h1v1h-1zM1 1h1v1h-1zM5 1h1v1h-1zM9 1h1v1h-1zM1 2h1v1h-1zM5 2h1v1h-1zM9 2h1v1h-1zM1 3h1v1h-1zM5 3h1v1h-1zM9 3h1v1h-1zM1 4h5v1h-5zM9 4h1v1h-1zM1 5h1v1h-1zM5 5h1v1h-1zM9 5h1v1h-1zM1 6h1v1h-1zM5 6h1v1h-1zM9 6h1v1h-1zM1 7h1v1h-1zM5 7h1v1h-1zM9 7h1v1h-1zM1 8h1v1h-1zM5 8h1v1h-1zM9 8h1v1h-1zM1 9h5v1h-5zM9 9h1v1h-1zM9 10h1v1h-1z"/></defs><g fill="#fff"><use href="#g0" x="21" y="27"/></g><g fill="#fff"><use href="#g1" x="41" y="27"/></g><g fill="#fff"><use href="#g2" x="76" y="13"/><use href="#g3" x="88" y="13"/><use href="#g4" x="100" y="13"/><use href="#g5" x="106" y="13"/></g><g fill="#fff"><use href="#g2" x="126" y="13"/><use href="#g3" x="138" y="13"/><use href="#g6" x="150" y="13"/><use href="#g5" x="156" y="13"/></g><g fill="#fff"><use href="#g2" x="176" y="13"/><use href="#g3" x="188" y="13"/><use href="#g7" x="200" y="13"/><use href="#g5" x="206" y="13"/></g><g fill="#fff"><use href="#g2" x="226" y="13"/><use href="#g3" x="238" y="13"/><use href="#g8" x="250" y="13"/><use href="#g5" x="256" y="13"/></g><g fill="#fff"><use href="#g2" x="273" y="13"/><use href="#g3" x="285" y="13"/><use href="#g4" x="297" y="13"/><use href="#g9" x="303" y="13"/><use href="#g5" x="309" y="13"/></g><g fill="#fff"><use href="#g2" x="323" y="13"/><use href="#g3" x="335" y="13"/><use href="#g6" x="347" y="13"/><use href="#g9" x="353" y="13"/><use href="#g5" x="359" y="13"/></g><g fill="#fff"><use href="#g2" x="373" y="13"/><use href="#g3" x="385" y="13"/><use href="#g7" x="397" y="13"/><use href="#g9" x="403" y="13"/><use href="#g5" x="409" y="13"/></g><g fill="#fff"><use href="#g2" x="423" y="13"/><use href="#g3" x="435" y="13"/><use href="#g8" x="447" y="13"/><use href="#g9" x="453" y="13"/><use href="#g5" x="459" y="13"/></g><g fill="#fff"><use href="#g2" x="474" y="13"/><use href="#g10" x="486" y="13"/><use href="#g4" x="498" y="13"/><use href="#g11" x="504" y="13"/></g><g fill="#fff"><use href="#g12" x="527" y="13"/><use href="#g13" x="539" y="13"/><use href="#g14" x="551" y="13"/><use href="#g4" x="557" y="13"/></g><g fill="#fff"><use href="#g12" x="576" y="13"/><use href="#g13" x="588" y="13"/><use href="#g4" x="600" y="13"/><use href="#g5" x="606" y="13"/></g><g fill="#fff"><use href="#g12" x="626" y="13"/><use href="#g13" x="638" y="13"/><use href="#g6" x="650" y="13"/><use href="#g5" x="656" y="13"/></g><g fill="#fff"><use href="#g15" x="676" y="13"/><use href="#g16" x="688" y="13"/><use href="#g7" x="700" y="13"/><use href="#g5" x="706" y="13"/></g><g fill="#fff"><use href="#g17" x="726" y="13"/><use href="#g18" x="738" y="13"/><use href="#g4" x="750" y="13"/><use href="#g5" x="756" y="13"/></g><g fill="#fff"><use href="#g19" x="772" y="13"/><use href="#g20" x="784" y="13"/><use href="#g21" x="796" y="13"/><use href="#g21" x="804" y="13"/><use href="#g22" x="812" y="13"/></g><g fill="#fff"><use href="#g19" x="821" y="13"/><use href="#g20" x="833" y="13"/><use href="#g23" x="845" y="13"/><use href="#g23" x="853" y="13"/><use href="#g23" x="861" y="13"/><use href="#g22" x="869" y="13"/></g><g fill="#000"><use href="#g24" x="892" y="13"/><use href="#g25" x="901" y="13"/></g><g fill="#fff"><use href="#g24" x="932" y="13"/><use href="#g26" x="941" y="13"/><use href="#g14" x="949" y="13"/><use href="#g4" x="955" y="13"/><use href="#g25" x="961" y="13"/></g><g fill="#000"><use href="#g6" x="14" y="69"/><use href="#g8" x="20" y="69"/><use href="#g27" x="26" y="69"/><use href="#g4" x="32" y="69"/><use href="#g6" x="38" y="69"/><use href="#g27" x="44" y="69"/><use href="#g4" x="50" y="69"/><use href="#g28" x="56" y="69"/></g><g fill="#000"><use href="#g22" x="110" y="69"/></g><g fill="#000"><use href="#g22" x="160" y="69"/></g><g fill="#000"><use href="#g22" x="210" y="69"/></g><g fill="#000"><use href="#g22" x="260" y="69"/></g><g fill="#000"><use href="#g22" x="310" y="69"/></g><g fill="#000"><use href="#g22" x="360" y="69"/></g><g fill="#000"><use href="#g22" x="410" y="69"/></g><g fill="#000"><use href="#g22" x="460" y="69"/></g><g fill="#000"><use href="#g22" x="510" y="69"/></g><g fill="#000"><use href="#g22" x="560" y="69"/></g><g fill="#000"><use href="#g22" x="610" y="69"/></g><g fill="#000"><use href="#g22" x="660" y="69"/></g><g fill="#000"><use href="#g22" x="710" y="69"/></g><g fill="#000"><use href="#g22" x="760" y="69"/></g><g fill="#000"><use href="#g22" x="810" y="69"/></g><g fill="#000"><use href="#g22" x="865" y="69"/></g><g fill="#000"><use href="#g22" x="915" y="69"/></g><g fill="#000"><use href="#g22" x="965" y="69"/></g><g fill="#000"><use href="#g6" x="14" y="97"/><use href="#g8" x="20" y="97"/><use href="#g27" x="26" y="97"/><use href="#g4" x="32" y="97"/><use href="#g6" x="38" y="97"/><use href="#g27" x="44" y="97"/><use href="#g4" x="50" y="97"/><use href="#g29" x="56" y="97"/></g><g fill="#000"><use href="#g6" x="88" y="97"/><use href="#g30" x="94" y="97"/><use href="#g8" x="98" y="97"/><use href="#g8" x="104" y="97"/><use href="#g8" x="110" y="97"/></g><g fill="#000"><use href="#g6" x="138" y="97"/><use href="#g30" x="144" y="97"/><use href="#g31" x="148" y="97"/><use href="#g7" x="154" y="97"/><use href="#g4" x="160" y="97"/></g><g fill="#000"><use href="#g6" x="188" y="97"/><use href="#g30" x="194" y="97"/><use href="#g14" x="198" y="97"/><use href="#g14" x="204" y="97"/><use href="#g14" x="210" y="97"/></g><g fill="#000"><use href="#g7" x="238" y="97"/><use href="#g30" x="244" y="97"/><use href="#g6" x="248" y="97"/><use href="#g32" x="254" y="97"/><use href="#g32" x="260" y="97"/></g><g fill="#000"><use href="#g7" x="288" y="97"/><use href="#g30" x="294" y="97"/><use href="#g7" x="298" y="97"/><use href="#g4" x="304" y="97"/><use href="#g7" x="310" y="97"/></g><g fill="#000"><use href="#g7" x="338" y="97"/><use href="#g30" x="344" y="97"/><use href="#g6" x="348" y="97"/><use href="#g29" x="354" y="97"/><use href="#g8" x="360" y="97"/></g><g fill="#000"><use href="#g7" x="388" y="97"/><use href="#g30" x="394" y="97"/><use href="#g4" x="398" y="97"/><use href="#g28" x="404" y="97"/><use href="#g14" x="410" y="97"/></g><g fill="#000"><use href="#g7" x="438" y="97"/><use href="#g30" x="444" y="97"/><use href="#g4" x="448" y="97"/><use href="#g9" x="454" y="97"/><use href="#g8" x="460" y="97"/></g><g fill="#000"><use href="#g7" x="488" y="97"/><use href="#g30" x="494" y="97"/><use href="#g7" x="498" y="97"/><use href="#g14" x="504" y="97"/><use href="#g4" x="510" y="97"/></g><g fill="#000"><use href="#g6" x="538" y="97"/><use href="#g30" x="544" y="97"/><use href="#g7" x="548" y="97"/><use href="#g14" x="554" y="97"/><use href="#g9" x="560" y="97"/></g><g fill="#000"><use href="#g6" x="588" y="97"/><use href="#g30" x="594" y="97"/><use href="#g8" x="598" y="97"/><use href="#g8" x="604" y="97"/><use href="#g9" x="610" y="97"/></g><g fill="#000"><use href="#g6" x="638" y="97"/><use href="#g30" x="644" y="97"/><use href="#g31" x="648" y="97"/><use href="#g29" x="654" y="97"/><use href="#g4" x="660" y="97"/></g><g fill="#000"><use href="#g7" x="688" y="97"/><use href="#g30" x="694" y="97"/><use href="#g6" x="698" y="97"/><use href="#g7" x="704" y="97"/><use href="#g4" x="710" y="97"/></g><g fill="#000"><use href="#g6" x="738" y="97"/><use href="#g30" x="744" y="97"/><use href="#g31" x="748" y="97"/><use href="#g6" x="754" y="97"/><use href="#g31" x="760" y="97"/></g><g fill="#000"><use href="#g7" x="788" y="97"/><use href="#g30" x="794" y="97"/><use href="#g8" x="798" y="97"/><use href="#g9" x="804" y="97"/><use href="#g28" x="810" y="97"/></g><g fill="#000"><use href="#g14" x="843" y="97"/><use href="#g30" x="849" y="97"/><use href="#g7" x="853" y="97"/><use href="#g32" x="859" y="97"/><use href="#g14" x="865" y="97"/></g><g fill="#000"><use href="#g6" x="893" y="97"/><use href="#g30" x="899" y="97"/><use href="#g31" x="903" y="97"/><use href="#g32" x="909" y="97"/><use href="#g9" x="915" y="97"/></g><g fill="#000"><use href="#g7" x="943" y="97"/><use href="#g30" x="949" y="97"/><use href="#g6" x="953" y="97"/><use href="#g28" x="959" y="97"/><use href="#g9" x="965" y="97"/></g><g fill="#000"><use href="#g6" x="14" y="125"/><use href="#g8" x="20" y="125"/><use href="#g27" x="26" y="125"/><use href="#g4" x="32" y="125"/><use href="#g6" x="38" y="125"/><use href="#g27" x="44" y="125"/><use href="#g4" x="50" y="125"/><use href="#g8" x="56" y="125"/></g><g fill="#000"><use href="#g6" x="88" y="125"/><use href="#g30" x="94" y="125"/><use href="#g8" x="98" y="125"/><use href="#g8" x="104" y="125"/><use href="#g28" x="110" y="125"/></g><g fill="#000"><use href="#g6" x="138" y="125"/><use href="#g30" x="144" y="125"/><use href="#g31" x="148" y="125"/><use href="#g32" x="154" y="125"/><use href="#g4" x="160" y="125"/></g><g fill="#000"><use href="#g7" x="188" y="125"/><use href="#g30" x="194" y="125"/><use href="#g9" x="198" y="125"/><use href="#g9" x="204" y="125"/><use href="#g9" x="210" y="125"/></g><g fill="#000"><use href="#g7" x="238" y="125"/><use href="#g30" x="244" y="125"/><use href="#g6" x="248" y="125"/><use href="#g8" x="254" y="125"/><use href="#g14" x="260" y="125"/></g><g fill="#000"><use href="#g7" x="288" y="125"/><use href="#g30" x="294" y="125"/><use href="#g7" x="298" y="125"/><use href="#g6" x="304" y="125"/><use href="#g8" x="310" y="125"/></g><g fill="#000"><use href="#g7" x="338" y="125"/><use href="#g30" x="344" y="125"/><use href="#g6" x="348" y="125"/><use href="#g28" x="354" y="125"/><use href="#g31" x="360" y="125"/></g><g fill="#000"><use href="#g7" x="388" y="125"/><use href="#g30" x="394" y="125"/><use href="#g4" x="398" y="125"/><use href="#g28" x="404" y="125"/><use href="#g31" x="410" y="125"/></g><g fill="#000"><use href="#g7" x="438" y="125"/><use href="#g30" x="444" y="125"/><use href="#g4" x="448" y="125"/><use href="#g9" x="454" y="125"/><use href="#g8" x="460" y="125"/></g><g fill="#000"><use href="#g7" x="488" y="125"/><use href="#g30" x="494" y="125"/><use href="#g7" x="498" y="125"/><use href="#g14" x="504" y="125"/><use href="#g4" x="510" y="125"/></g><g fill="#000"><use href="#g6" x="538" y="125"/><use href="#g30" x="544" y="125"/><use href="#g7" x="548" y="125"/><use href="#g31" x="554" y="125"/><use href="#g29" x="560" y="125"/></g><g fill="#000"><use href="#g6" x="588" y="125"/><use href="#g30" x="594" y="125"/><use href="#g8" x="598" y="125"/><use href="#g32" x="604" y="125"/><use href="#g31" x="610" y="125"/></g><g fill="#000"><use href="#g6" x="638" y="125"/><use href="#g30" x="644" y="125"/><use href="#g31" x="648" y="125"/><use href="#g32" x="654" y="125"/><use href="#g14" x="660" y="125"/></g><g fill="#000"><use href="#g7" x="688" y="125"/><use href="#g30" x="694" y="125"/><use href="#g6" x="698" y="125"/><use href="#g6" x="704" y="125"/><use href="#g14" x="710" y="125"/></g><g fill="#000"><use href="#g6" x="738" y="125"/><use href="#g30" x="744" y="125"/><use href="#g31" x="748" y="125"/><use href="#g7" x="754" y="125"/><use href="#g9" x="760" y="125"/></g><g fill="#000"><use href="#g7" x="788" y="125"/><use href="#g30" x="794" y="125"/><use href="#g32" x="798" y="125"/><use href="#g14" x="804" y="125"/><use href="#g14" x="810" y="125"/></g><g fill="#000"><use href="#g14" x="843" y="125"/><use href="#g30" x="849" y="125"/><use href="#g7" x="853" y="125"/><use href="#g32" x="859" y="125"/><use href="#g7" x="865" y="125"/></g><g fill="#000"><use href="#g6" x="893" y="125"/><use href="#g30" x="899" y="125"/><use href="#g31" x="903" y="125"/><use href="#g7" x="909" y="125"/><use href="#g9" x="915" y="125"/></g><g fill="#000"><use href="#g7" x="943" y="125"/><use href="#g30" x="949" y="125"/><use href="#g6" x="953" y="125"/><use href="#g29" x="959" y="125"/><use href="#g9" x="965" y="125"/></g><g fill="#000"><use href="#g6" x="14" y="153"/><use href="#g8" x="20" y="153"/><use href="#g27" x="26" y="153"/><use href="#g4" x="32" y="153"/><use href="#g6" x="38" y="153"/><use href="#g27" x="44" y="153"/><use href="#g4" x="50" y="153"/><use href="#g6" x="56" y="153"/></g><g fill="#000"><use href="#g6" x="88" y="153"/><use href="#g30" x="94" y="153"/><use href="#g8" x="98" y="153"/><use href="#g31" x="104" y="153"/><use href="#g6" x="110" y="153"/></g><g fill="#000"><use href="#g6" x="138" y="153"/><use href="#g30" x="144" y="153"/><use href="#g14" x="148" y="153"/><use href="#g9" x="154" y="153"/><use href="#g14" x="160" y="153"/></g><g fill="#000"><use href="#g7" x="188" y="153"/><use href="#g30" x="194" y="153"/><use href="#g9" x="198" y="153"/><use href="#g14" x="204" y="153"/><use href="#g7" x="210" y="153"/></g><g fill="#000"><use href="#g7" x="238" y="153"/><use href="#g30" x="244" y="153"/><use href="#g7" x="248" y="153"/><use href="#g8" x="254" y="153"/><use href="#g9" x="260" y="153"/></g><g fill="#000"><use href="#g7" x="288" y="153"/><use href="#g30" x="294" y="153"/><use href="#g32" x="298" y="153"/><use href="#g9" x="304" y="153"/><use href="#g14" x="310" y="153"/></g><g fill="#000"><use href="#g7" x="338" y="153"/><use href="#g30" x="344" y="153"/><use href="#g7" x="348" y="153"/><use href="#g32" x="354" y="153"/><use href="#g6" x="360" y="153"/></g><g fill="#000"><use href="#g7" x="388" y="153"/><use href="#g30" x="394" y="153"/><use href="#g6" x="398" y="153"/><use href="#g6" x="404" y="153"/><use href="#g31" x="410" y="153"/></g><g fill="#000"><use href="#g7" x="438" y="153"/><use href="#g30" x="444" y="153"/><use href="#g4" x="448" y="153"/><use href="#g8" x="454" y="153"/><use href="#g4" x="460" y="153"/></g><g fill="#000"><use href="#g7" x="488" y="153"/><use href="#g30" x="494" y="153"/><use href="#g32" x="498" y="153"/><use href="#g8" x="504" y="153"/><use href="#g28" x="510" y="153"/></g><g fill="#000"><use href="#g6" x="538" y="153"/><use href="#g30" x="544" y="153"/><use href="#g32" x="548" y="153"/><use href="#g8" x="554" y="153"/><use href="#g4" x="560" y="153"/></g><g fill="#000"><use href="#g6" x="588" y="153"/><use href="#g30" x="594" y="153"/><use href="#g8" x="598" y="153"/><use href="#g14" x="604" y="153"/><use href="#g31" x="610" y="153"/></g><g fill="#000"><use href="#g6" x="638" y="153"/><use href="#g30" x="644" y="153"/><use href="#g14" x="648" y="153"/><use href="#g7" x="654" y="153"/><use href="#g7" x="660" y="153"/></g><g fill="#000"><use href="#g7" x="688" y="153"/><use href="#g30" x="694" y="153"/><use href="#g7" x="698" y="153"/><use href="#g4" x="704" y="153"/><use href="#g29" x="710" y="153"/></g><g fill="#000"><use href="#g6" x="738" y="153"/><use href="#g30" x="744" y="153"/><use href="#g31" x="748" y="153"/><use href="#g28" x="754" y="153"/><use href="#g7" x="760" y="153"/></g><g fill="#000"><use href="#g7" x="788" y="153"/><use href="#g30" x="794" y="153"/><use href="#g8" x="798" y="153"/><use href="#g31" x="804" y="153"/><use href="#g6" x="810" y="153"/></g><g fill="#000"><use href="#g14" x="843" y="153"/><use href="#g30" x="849" y="153"/><use href="#g32" x="853" y="153"/><use href="#g6" x="859" y="153"/><use href="#g4" x="865" y="153"/></g><g fill="#000"><use href="#g6" x="893" y="153"/><use href="#g30" x="899" y="153"/><use href="#g31" x="903" y="153"/><use href="#g7" x="909" y="153"/><use href="#g9" x="915" y="153"/></g><g fill="#000"><use href="#g7" x="943" y="153"/><use href="#g30" x="949" y="153"/><use href="#g6" x="953" y="153"/><use href="#g8" x="959" y="153"/><use href="#g9" x="965" y="153"/></g><g fill="#000"><use href="#g6" x="14" y="182"/><use href="#g8" x="20" y="182"/><use href="#g27" x="26" y="182"/><use href="#g4" x="32" y="182"/><use href="#g6" x="38" y="182"/><use href="#g27" x="44" y="182"/><use href="#g4" x="50" y="182"/><use href="#g4" x="56" y="182"/></g><g fill="#000"><use href="#g6" x="88" y="182"/><use href="#g30" x="94" y="182"/><use href="#g8" x="98" y="182"/><use href="#g28" x="104" y="182"/><use href="#g31" x="110" y="182"/></g><g fill="#000"><use href="#g6" x="138" y="182"/><use href="#g30" x="144" y="182"/><use href="#g14" x="148" y="182"/><use href="#g9" x="154" y="182"/><use href="#g14" x="160" y="182"/></g><g fill="#000"><use href="#g7" x="188" y="182"/><use href="#g30" x="194" y="182"/><use href="#g4" x="198" y="182"/><use href="#g9" x="204" y="182"/><use href="#g4" x="210" y="182"/></g><g fill="#000"><use href="#g7" x="238" y="182"/><use href="#g30" x="244" y="182"/><use href="#g7" x="248" y="182"/><use href="#g29" x="254" y="182"/><use href="#g4" x="260" y="182"/></g><g fill="#000"><use href="#g7" x="288" y="182"/><use href="#g30" x="294" y="182"/><use href="#g7" x="298" y="182"/><use href="#g28" x="304" y="182"/><use href="#g31" x="310" y="182"/></g><g fill="#000"><use href="#g7" x="338" y="182"/><use href="#g30" x="344" y="182"/><use href="#g7" x="348" y="182"/><use href="#g28" x="354" y="182"/><use href="#g28" x="360" y="182"/></g><g fill="#000"><use href="#g7" x="388" y="182"/><use href="#g30" x="394" y="182"/><use href="#g6" x="398" y="182"/><use href="#g8" x="404" y="182"/><use href="#g28" x="410" y="182"/></g><g fill="#000"><use href="#g7" x="438" y="182"/><use href="#g30" x="444" y="182"/><use href="#g6" x="448" y="182"/><use href="#g9" x="454" y="182"/><use href="#g7" x="460" y="182"/></g><g fill="#000"><use href="#g7" x="488" y="182"/><use href="#g30" x="494" y="182"/><use href="#g32" x="498" y="182"/><use href="#g29" x="504" y="182"/><use href="#g4" x="510" y="182"/></g><g fill="#000"><use href="#g6" x="538" y="182"/><use href="#g30" x="544" y="182"/><use href="#g32" x="548" y="182"/><use href="#g8" x="554" y="182"/><use href="#g7" x="560" y="182"/></g><g fill="#000"><use href="#g6" x="588" y="182"/><use href="#g30" x="594" y="182"/><use href="#g29" x="598" y="182"/><use href="#g9" x="604" y="182"/><use href="#g14" x="610" y="182"/></g><g fill="#000"><use href="#g6" x="638" y="182"/><use href="#g30" x="644" y="182"/><use href="#g14" x="648" y="182"/><use href="#g29" x="654" y="182"/><use href="#g8" x="660" y="182"/></g><g fill="#000"><use href="#g7" x="688" y="182"/><use href="#g30" x="694" y="182"/><use href="#g7" x="698" y="182"/><use href="#g6" x="704" y="182"/><use href="#g28" x="710" y="182"/></g><g fill="#000"><use href="#g6" x="738" y="182"/><use href="#g30" x="744" y="182"/><use href="#g31" x="748" y="182"/><use href="#g28" x="754" y="182"/><use href="#g28" x="760" y="182"/></g><g fill="#000"><use href="#g7" x="788" y="182"/><use href="#g30" x="794" y="182"/><use href="#g8" x="798" y="182"/><use href="#g31" x="804" y="182"/><use href="#g8" x="810" y="182"/></g><g fill="#000"><use href="#g14" x="843" y="182"/><use href="#g30" x="849" y="182"/><use href="#g32" x="853" y="182"/><use href="#g6" x="859" y="182"/><use href="#g7" x="865" y="182"/></g><g fill="#000"><use href="#g6" x="893" y="182"/><use href="#g30" x="899" y="182"/><use href="#g31" x="903" y="182"/><use href="#g7" x="909" y="182"/><use href="#g9" x="915" y="182"/></g><g fill="#000"><use href="#g7" x="943" y="182"/><use href="#g30" x="949" y="182"/><use href="#g6" x="953" y="182"/><use href="#g32" x="959" y="182"/><use href="#g9" x="965" y="182"/></g><g fill="#000"><use href="#g6" x="14" y="210"/><use href="#g8" x="20" y="210"/><use href="#g27" x="26" y="210"/><use href="#g4" x="32" y="210"/><use href="#g6" x="38" y="210"/><use href="#g27" x="44" y="210"/><use href="#g4" x="50" y="210"/><use href="#g9" x="56" y="210"/></g><g fill="#000"><use href="#g6" x="88" y="210"/><use href="#g30" x="94" y="210"/><use href="#g8" x="98" y="210"/><use href="#g32" x="104" y="210"/><use href="#g32" x="110" y="210"/></g><g fill="#000"><use href="#g6" x="138" y="210"/><use href="#g30" x="144" y="210"/><use href="#g14" x="148" y="210"/><use href="#g9" x="154" y="210"/><use href="#g4" x="160" y="210"/></g><g fill="#000"><use href="#g7" x="188" y="210"/><use href="#g30" x="194" y="210"/><use href="#g9" x="198" y="210"/><use href="#g14" x="204" y="210"/><use href="#g8" x="210" y="210"/></g><g fill="#000"><use href="#g7" x="238" y="210"/><use href="#g30" x="244" y="210"/><use href="#g7" x="248" y="210"/><use href="#g7" x="254" y="210"/><use href="#g29" x="260" y="210"/></g><g fill="#000"><use href="#g7" x="288" y="210"/><use href="#g30" x="294" y="210"/><use href="#g7" x="298" y="210"/><use href="#g28" x="304" y="210"/><use href="#g4" x="310" y="210"/></g><g fill="#000"><use href="#g7" x="338" y="210"/><use href="#g30" x="344" y="210"/><use href="#g7" x="348" y="210"/><use href="#g31" x="354" y="210"/><use href="#g7" x="360" y="210"/></g><g fill="#000"><use href="#g7" x="388" y="210"/><use href="#g30" x="394" y="210"/><use href="#g6" x="398" y="210"/><use href="#g29" x="404" y="210"/><use href="#g14" x="410" y="210"/></g><g fill="#000"><use href="#g7" x="438" y="210"/><use href="#g30" x="444" y="210"/><use href="#g6" x="448" y="210"/><use href="#g4" x="454" y="210"/><use href="#g9" x="460" y="210"/></g><g fill="#000"><use href="#g7" x="488" y="210"/><use href="#g30" x="494" y="210"/><use href="#g32" x="498" y="210"/><use href="#g32" x="504" y="210"/><use href="#g32" x="510" y="210"/></g><g fill="#000"><use href="#g6" x="538" y="210"/><use href="#g30" x="544" y="210"/><use href="#g32" x="548" y="210"/><use href="#g8" x="554" y="210"/><use href="#g6" x="560" y="210"/></g><g fill="#000"><use href="#g6" x="588" y="210"/><use href="#g30" x="594" y="210"/><use href="#g29" x="598" y="210"/><use href="#g9" x="604" y="210"/><use href="#g31" x="610" y="210"/></g><g fill="#000"><use href="#g6" x="638" y="210"/><use href="#g30" x="644" y="210"/><use href="#g14" x="648" y="210"/><use href="#g29" x="654" y="210"/><use href="#g9" x="660" y="210"/></g><g fill="#000"><use href="#g7" x="688" y="210"/><use href="#g30" x="694" y="210"/><use href="#g7" x="698" y="210"/><use href="#g4" x="704" y="210"/><use href="#g29" x="710" y="210"/></g><g fill="#000"><use href="#g6" x="738" y="210"/><use href="#g30" x="744" y="210"/><use href="#g31" x="748" y="210"/><use href="#g28" x="754" y="210"/><use href="#g28" x="760" y="210"/></g><g fill="#000"><use href="#g7" x="788" y="210"/><use href="#g30" x="794" y="210"/><use href="#g8" x="798" y="210"/><use href="#g28" x="804" y="210"/><use href="#g32" x="810" y="210"/></g><g fill="#000"><use href="#g14" x="843" y="210"/><use href="#g30" x="849" y="210"/><use href="#g32" x="853" y="210"/><use href="#g4" x="859" y="210"/><use href="#g7" x="865" y="210"/></g><g fill="#000"><use href="#g6" x="893" y="210"/><use href="#g30" x="899" y="210"/><use href="#g31" x="903" y="210"/><use href="#g7" x="909" y="210"/><use href="#g9" x="915" y="210"/></g><g fill="#000"><use href="#g7" x="943" y="210"/><use href="#g30" x="949" y="210"/><use href="#g6" x="953" y="210"/><use href="#g7" x="959" y="210"/><use href="#g9" x="965" y="210"/></g><g fill="#000"><use href="#g6" x="14" y="238"/><use href="#g8" x="20" y="238"/><use href="#g27" x="26" y="238"/><use href="#g4" x="32" y="238"/><use href="#g6" x="38" y="238"/><use href="#g27" x="44" y="238"/><use href="#g9" x="50" y="238"/><use href="#g14" x="56" y="238"/></g><g fill="#000"><use href="#g6" x="88" y="238"/><use href="#g30" x="94" y="238"/><use href="#g8" x="98" y="238"/><use href="#g7" x="104" y="238"/><use href="#g8" x="110" y="238"/></g><g fill="#000"><use href="#g6" x="138" y="238"/><use href="#g30" x="144" y="238"/><use href="#g31" x="148" y="238"/><use href="#g31" x="154" y="238"/><use href="#g6" x="160" y="238"/></g><g fill="#000"><use href="#g7" x="188" y="238"/><use href="#g30" x="194" y="238"/><use href="#g9" x="198" y="238"/><use href="#g31" x="204" y="238"/><use href="#g32" x="210" y="238"/></g><g fill="#000"><use href="#g7" x="238" y="238"/><use href="#g30" x="244" y="238"/><use href="#g7" x="248" y="238"/><use href="#g9" x="254" y="238"/><use href="#g6" x="260" y="238"/></g><g fill="#000"><use href="#g7" x="288" y="238"/><use href="#g30" x="294" y="238"/><use href="#g32" x="298" y="238"/><use href="#g8" x="304" y="238"/><use href="#g7" x="310" y="238"/></g><g fill="#000"><use href="#g7" x="338" y="238"/><use href="#g30" x="344" y="238"/><use href="#g7" x="348" y="238"/><use href="#g28" x="354" y="238"/><use href="#g29" x="360" y="238"/></g><g fill="#000"><use href="#g7" x="388" y="238"/><use href="#g30" x="394" y="238"/><use href="#g6" x="398" y="238"/><use href="#g32" x="404" y="238"/><use href="#g7" x="410" y="238"/></g><g fill="#000"><use href="#g7" x="438" y="238"/><use href="#g30" x="444" y="238"/><use href="#g4" x="448" y="238"/><use href="#g14" x="454" y="238"/><use href="#g9" x="460" y="238"/></g><g fill="#000"><use href="#g7" x="488" y="238"/><use href="#g30" x="494" y="238"/><use href="#g32" x="498" y="238"/><use href="#g4" x="504" y="238"/><use href="#g6" x="510" y="238"/></g><g fill="#000"><use href="#g6" x="538" y="238"/><use href="#g30" x="544" y="238"/><use href="#g32" x="548" y="238"/><use href="#g32" x="554" y="238"/><use href="#g31" x="560" y="238"/></g><g fill="#000"><use href="#g6" x="588" y="238"/><use href="#g30" x="594" y="238"/><use href="#g29" x="598" y="238"/><use href="#g9" x="604" y="238"/><use href="#g7" x="610" y="238"/></g><g fill="#000"><use href="#g6" x="638" y="238"/><use href="#g30" x="644" y="238"/><use href="#g14" x="648" y="238"/><use href="#g32" x="654" y="238"/><use href="#g28" x="660" y="238"/></g><g fill="#000"><use href="#g7" x="688" y="238"/><use href="#g30" x="694" y="238"/><use href="#g6" x="698" y="238"/><use href="#g14" x="704" y="238"/><use href="#g9" x="710" y="238"/></g><g fill="#000"><use href="#g6" x="738" y="238"/><use href="#g30" x="744" y="238"/><use href="#g31" x="748" y="238"/><use href="#g29" x="754" y="238"/><use href="#g28" x="760" y="238"/></g><g fill="#000"><use href="#g7" x="788" y="238"/><use href="#g30" x="794" y="238"/><use href="#g8" x="798" y="238"/><use href="#g32" x="804" y="238"/><use href="#g8" x="810" y="238"/></g><g fill="#000"><use href="#g14" x="843" y="238"/><use href="#g30" x="849" y="238"/><use href="#g7" x="853" y="238"/><use href="#g31" x="859" y="238"/><use href="#g28" x="865" y="238"/></g><g fill="#000"><use href="#g6" x="893" y="238"/><use href="#g30" x="899" y="238"/><use href="#g31" x="903" y="238"/><use href="#g7" x="909" y="238"/><use href="#g9" x="915" y="238"/></g><g fill="#000"><use href="#g7" x="943" y="238"/><use href="#g30" x="949" y="238"/><use href="#g6" x="953" y="238"/><use href="#g6" x="959" y="238"/><use href="#g9" x="965" y="238"/></g><g fill="#000"><use href="#g6" x="14" y="267"/><use href="#g8" x="20" y="267"/><use href="#g27" x="26" y="267"/><use href="#g4" x="32" y="267"/><use href="#g6" x="38" y="267"/><use href="#g27" x="44" y="267"/><use href="#g9" x="50" y="267"/><use href="#g31" x="56" y="267"/></g><g fill="#000"><use href="#g6" x="88" y="267"/><use href="#g30" x="94" y="267"/><use href="#g8" x="98" y="267"/><use href="#g6" x="104" y="267"/><use href="#g4" x="110" y="267"/></g><g fill="#000"><use href="#g6" x="138" y="267"/><use href="#g30" x="144" y="267"/><use href="#g31" x="148" y="267"/><use href="#g32" x="154" y="267"/><use href="#g28" x="160" y="267"/></g><g fill="#000"><use href="#g7" x="188" y="267"/><use href="#g30" x="194" y="267"/><use href="#g9" x="198" y="267"/><use href="#g7" x="204" y="267"/><use href="#g32" x="210" y="267"/></g><g fill="#000"><use href="#g7" x="238" y="267"/><use href="#g30" x="244" y="267"/><use href="#g6" x="248" y="267"/><use href="#g7" x="254" y="267"/><use href="#g14" x="260" y="267"/></g><g fill="#000"><use href="#g7" x="288" y="267"/><use href="#g30" x="294" y="267"/><use href="#g32" x="298" y="267"/><use href="#g9" x="304" y="267"/><use href="#g4" x="310" y="267"/></g><g fill="#000"><use href="#g7" x="338" y="267"/><use href="#g30" x="344" y="267"/><use href="#g7" x="348" y="267"/><use href="#g32" x="354" y="267"/><use href="#g9" x="360" y="267"/></g><g fill="#000"><use href="#g7" x="388" y="267"/><use href="#g30" x="394" y="267"/><use href="#g6" x="398" y="267"/><use href="#g4" x="404" y="267"/><use href="#g28" x="410" y="267"/></g><g fill="#000"><use href="#g7" x="438" y="267"/><use href="#g30" x="444" y="267"/><use href="#g4" x="448" y="267"/><use href="#g29" x="454" y="267"/><use href="#g32" x="460" y="267"/></g><g fill="#000"><use href="#g7" x="488" y="267"/><use href="#g30" x="494" y="267"/><use href="#g7" x="498" y="267"/><use href="#g8" x="504" y="267"/><use href="#g29" x="510" y="267"/></g><g fill="#000"><use href="#g6" x="538" y="267"/><use href="#g30" x="544" y="267"/><use href="#g32" x="548" y="267"/><use href="#g7" x="554" y="267"/><use href="#g8" x="560" y="267"/></g><g fill="#000"><use href="#g6" x="588" y="267"/><use href="#g30" x="594" y="267"/><use href="#g8" x="598" y="267"/><use href="#g31" x="604" y="267"/><use href="#g4" x="610" y="267"/></g><g fill="#000"><use href="#g6" x="638" y="267"/><use href="#g30" x="644" y="267"/><use href="#g14" x="648" y="267"/><use href="#g9" x="654" y="267"/><use href="#g29" x="660" y="267"/></g><g fill="#000"><use href="#g7" x="688" y="267"/><use href="#g30" x="694" y="267"/><use href="#g6" x="698" y="267"/><use href="#g32" x="704" y="267"/><use href="#g4" x="710" y="267"/></g><g fill="#000"><use href="#g6" x="738" y="267"/><use href="#g30" x="744" y="267"/><use href="#g31" x="748" y="267"/><use href="#g32" x="754" y="267"/><use href="#g14" x="760" y="267"/></g><g fill="#000"><use href="#g7" x="788" y="267"/><use href="#g30" x="794" y="267"/><use href="#g32" x="798" y="267"/><use href="#g14" x="804" y="267"/><use href="#g6" x="810" y="267"/></g><g fill="#000"><use href="#g14" x="843" y="267"/><use href="#g30" x="849" y="267"/><use href="#g7" x="853" y="267"/><use href="#g7" x="859" y="267"/><use href="#g31" x="865" y="267"/></g><g fill="#000"><use href="#g6" x="893" y="267"/><use href="#g30" x="899" y="267"/><use href="#g31" x="903" y="267"/><use href="#g7" x="909" y="267"/><use href="#g9" x="915" y="267"/></g><g fill="#000"><use href="#g7" x="943" y="267"/><use href="#g30" x="949" y="267"/><use href="#g6" x="953" y="267"/><use href="#g9" x="959" y="267"/><use href="#g9" x="965" y="267"/></g><g fill="#000"><use href="#g6" x="14" y="295"/><use href="#g8" x="20" y="295"/><use href="#g27" x="26" y="295"/><use href="#g4" x="32" y="295"/><use href="#g6" x="38" y="295"/><use href="#g27" x="44" y="295"/><use href="#g9" x="50" y="295"/><use href="#g8" x="56" y="295"/></g><g fill="#000"><use href="#g6" x="88" y="295"/><use href="#g30" x="94" y="295"/><use href="#g8" x="98" y="295"/><use href="#g9" x="104" y="295"/><use href="#g14" x="110" y="295"/></g><g fill="#000"><use href="#g6" x="138" y="295"/><use href="#g30" x="144" y="295"/><use href="#g31" x="148" y="295"/><use href="#g6" x="154" y="295"/><use href="#g29" x="160" y="295"/></g><g fill="#000"><use href="#g6" x="188" y="295"/><use href="#g30" x="194" y="295"/><use href="#g14" x="198" y="295"/><use href="#g14" x="204" y="295"/><use href="#g32" x="210" y="295"/></g><g fill="#000"><use href="#g7" x="238" y="295"/><use href="#g30" x="244" y="295"/><use href="#g4" x="248" y="295"/><use href="#g14" x="254" y="295"/><use href="#g31" x="260" y="295"/></g><g fill="#000"><use href="#g7" x="288" y="295"/><use href="#g30" x="294" y="295"/><use href="#g7" x="298" y="295"/><use href="#g8" x="304" y="295"/><use href="#g31" x="310" y="295"/></g><g fill="#000"><use href="#g7" x="338" y="295"/><use href="#g30" x="344" y="295"/><use href="#g7" x="348" y="295"/><use href="#g6" x="354" y="295"/><use href="#g7" x="360" y="295"/></g><g fill="#000"><use href="#g7" x="388" y="295"/><use href="#g30" x="394" y="295"/><use href="#g6" x="398" y="295"/><use href="#g4" x="404" y="295"/><use href="#g4" x="410" y="295"/></g><g fill="#000"><use href="#g7" x="438" y="295"/><use href="#g30" x="444" y="295"/><use href="#g4" x="448" y="295"/><use href="#g8" x="454" y="295"/><use href="#g28" x="460" y="295"/></g><g fill="#000"><use href="#g7" x="488" y="295"/><use href="#g30" x="494" y="295"/><use href="#g7" x="498" y="295"/><use href="#g4" x="504" y="295"/><use href="#g32" x="510" y="295"/></g><g fill="#000"><use href="#g6" x="538" y="295"/><use href="#g30" x="544" y="295"/><use href="#g32" x="548" y="295"/><use href="#g8" x="554" y="295"/><use href="#g32" x="560" y="295"/></g><g fill="#000"><use href="#g6" x="588" y="295"/><use href="#g30" x="594" y="295"/><use href="#g8" x="598" y="295"/><use href="#g29" x="604" y="295"/><use href="#g32" x="610" y="295"/></g><g fill="#000"><use href="#g6" x="638" y="295"/><use href="#g30" x="644" y="295"/><use href="#g31" x="648" y="295"/><use href="#g28" x="654" y="295"/><use href="#g31" x="660" y="295"/></g><g fill="#000"><use href="#g7" x="688" y="295"/><use href="#g30" x="694" y="295"/><use href="#g6" x="698" y="295"/><use href="#g6" x="704" y="295"/><use href="#g14" x="710" y="295"/></g><g fill="#000"><use href="#g6" x="738" y="295"/><use href="#g30" x="744" y="295"/><use href="#g31" x="748" y="295"/><use href="#g7" x="754" y="295"/><use href="#g7" x="760" y="295"/></g><g fill="#000"><use href="#g7" x="788" y="295"/><use href="#g30" x="794" y="295"/><use href="#g32" x="798" y="295"/><use href="#g8" x="804" y="295"/><use href="#g7" x="810" y="295"/></g><g fill="#000"><use href="#g14" x="843" y="295"/><use href="#g30" x="849" y="295"/><use href="#g7" x="853" y="295"/><use href="#g9" x="859" y="295"/><use href="#g7" x="865" y="295"/></g><g fill="#000"><use href="#g6" x="893" y="295"/><use href="#g30" x="899" y="295"/><use href="#g31" x="903" y="295"/><use href="#g7" x="909" y="295"/><use href="#g9" x="915" y="295"/></g><g fill="#000"><use href="#g7" x="943" y="295"/><use href="#g30" x="949" y="295"/><use href="#g4" x="953" y="295"/><use href="#g14" x="959" y="295"/><use href="#g9" x="965" y="295"/></g><g fill="#fff"><use href="#g2" x="568" y="336"/><use href="#g3" x="580" y="336"/><use href="#g8" x="592" y="336"/><use href="#g5" x="598" y="336"/></g><g fill="#fff"><use href="#g4" x="655" y="336"/><use href="#g4" x="661" y="336"/><use href="#g33" x="667" y="336"/><use href="#g7" x="679" y="336"/><use href="#g9" x="685" y="336"/><use href="#g34" x="691" y="336"/></g><g fill="#fff"><use href="#g4" x="740" y="336"/><use href="#g29" x="746" y="336"/><use href="#g33" x="752" y="336"/><use href="#g9" x="764" y="336"/><use href="#g9" x="770" y="336"/><use href="#g34" x="776" y="336"/></g><g fill="#fff"><use href="#g16" x="837" y="336"/><use href="#g35" x="849" y="336"/></g><g fill="#fff"><use href="#g16" x="909" y="336"/><use href="#g35" x="921" y="336"/><use href="#g36" x="933" y="336"/><use href="#g37" x="945" y="336"/></g><g fill="#000"><use href="#g6" x="570" y="364"/><use href="#g8" x="576" y="364"/><use href="#g27" x="582" y="364"/><use href="#g4" x="588" y="364"/><use href="#g6" x="594" y="364"/><use href="#g27" x="600" y="364"/><use href="#g4" x="606" y="364"/><use href="#g29" x="612" y="364"/></g><g fill="#000"><use href="#g7" x="686" y="364"/><use href="#g30" x="692" y="364"/><use href="#g6" x="696" y="364"/><use href="#g29" x="702" y="364"/><use href="#g29" x="708" y="364"/></g><g fill="#000"><use href="#g7" x="771" y="364"/><use href="#g30" x="777" y="364"/><use href="#g6" x="781" y="364"/><use href="#g32" x="787" y="364"/><use href="#g32" x="793" y="364"/></g><g fill="#000"><use href="#g7" x="855" y="364"/><use href="#g30" x="861" y="364"/><use href="#g6" x="865" y="364"/><use href="#g8" x="871" y="364"/><use href="#g14" x="877" y="364"/></g><g fill="#0000dd"><use href="#g22" x="937" y="364"/><use href="#g9" x="943" y="364"/><use href="#g30" x="949" y="364"/><use href="#g9" x="953" y="364"/><use href="#g4" x="959" y="364"/><use href="#g8" x="965" y="364"/></g><g fill="#000"><use href="#g6" x="570" y="392"/><use href="#g8" x="576" y="392"/><use href="#g27" x="582" y="392"/><use href="#g4" x="588" y="392"/><use href="#g6" x="594" y="392"/><use href="#g27" x="600" y="392"/><use href="#g4" x="606" y="392"/><use href="#g8" x="612" y="392"/></g><g fill="#000"><use href="#g7" x="686" y="392"/><use href="#g30" x="692" y="392"/><use href="#g7" x="696" y="392"/><use href="#g6" x="702" y="392"/><use href="#g32" x="708" y="392"/></g><g fill="#000"><use href="#g7" x="771" y="392"/><use href="#g30" x="777" y="392"/><use href="#g6" x="781" y="392"/><use href="#g8" x="787" y="392"/><use href="#g14" x="793" y="392"/></g><g fill="#000"><use href="#g7" x="855" y="392"/><use href="#g30" x="861" y="392"/><use href="#g7" x="865" y="392"/><use href="#g8" x="871" y="392"/><use href="#g9" x="877" y="392"/></g><g fill="#0000dd"><use href="#g22" x="937" y="392"/><use href="#g9" x="943" y="392"/><use href="#g30" x="949" y="392"/><use href="#g9" x="953" y="392"/><use href="#g14" x="959" y="392"/><use href="#g4" x="965" y="392"/></g><g fill="#000"><use href="#g6" x="570" y="420"/><use href="#g8" x="576" y="420"/><use href="#g27" x="582" y="420"/><use href="#g4" x="588" y="420"/><use href="#g6" x="594" y="420"/><use href="#g27" x="600" y="420"/><use href="#g4" x="606" y="420"/><use href="#g6" x="612" y="420"/></g><g fill="#000"><use href="#g7" x="686" y="420"/><use href="#g30" x="692" y="420"/><use href="#g7" x="696" y="420"/><use href="#g8" x="702" y="420"/><use href="#g4" x="708" y="420"/></g><g fill="#000"><use href="#g7" x="771" y="420"/><use href="#g30" x="777" y="420"/><use href="#g7" x="781" y="420"/><use href="#g8" x="787" y="420"/><use href="#g9" x="793" y="420"/></g><g fill="#000"><use href="#g7" x="855" y="420"/><use href="#g30" x="861" y="420"/><use href="#g7" x="865" y="420"/><use href="#g29" x="871" y="420"/><use href="#g4" x="877" y="420"/></g><g fill="#0000dd"><use href="#g22" x="937" y="420"/><use href="#g9" x="943" y="420"/><use href="#g30" x="949" y="420"/><use href="#g9" x="953" y="420"/><use href="#g4" x="959" y="420"/><use href="#g4" x="965" y="420"/></g><g fill="#000"><use href="#g6" x="570" y="448"/><use href="#g8" x="576" y="448"/><use href="#g27" x="582" y="448"/><use href="#g4" x="588" y="448"/><use href="#g6" x="594" y="448"/><use href="#g27" x="600" y="448"/><use href="#g4" x="606" y="448"/><use href="#g4" x="612" y="448"/></g><g fill="#000"><use href="#g7" x="686" y="448"/><use href="#g30" x="692" y="448"/><use href="#g6" x="696" y="448"/><use href="#g14" x="702" y="448"/><use href="#g4" x="708" y="448"/></g><g fill="#000"><use href="#g7" x="771" y="448"/><use href="#g30" x="777" y="448"/><use href="#g7" x="781" y="448"/><use href="#g29" x="787" y="448"/><use href="#g4" x="793" y="448"/></g><g fill="#000"><use href="#g7" x="855" y="448"/><use href="#g30" x="861" y="448"/><use href="#g7" x="865" y="448"/><use href="#g7" x="871" y="448"/><use href="#g29" x="877" y="448"/></g><g fill="#dd0000"><use href="#g9" x="943" y="448"/><use href="#g30" x="949" y="448"/><use href="#g9" x="953" y="448"/><use href="#g6" x="959" y="448"/><use href="#g8" x="965" y="448"/></g><g fill="#000"><use href="#g6" x="570" y="476"/><use href="#g8" x="576" y="476"/><use href="#g27" x="582" y="476"/><use href="#g4" x="588" y="476"/><use href="#g6" x="594" y="476"/><use href="#g27" x="600" y="476"/><use href="#g4" x="606" y="476"/><use href="#g9" x="612" y="476"/></g><g fill="#000"><use href="#g7" x="686" y="476"/><use href="#g30" x="692" y="476"/><use href="#g7" x="696" y="476"/><use href="#g7" x="702" y="476"/><use href="#g7" x="708" y="476"/></g><g fill="#000"><use href="#g7" x="771" y="476"/><use href="#g30" x="777" y="476"/><use href="#g7" x="781" y="476"/><use href="#g7" x="787" y="476"/><use href="#g29" x="793" y="476"/></g><g fill="#000"><use href="#g7" x="855" y="476"/><use href="#g30" x="861" y="476"/><use href="#g7" x="865" y="476"/><use href="#g9" x="871" y="476"/><use href="#g6" x="877" y="476"/></g><g fill="#dd0000"><use href="#g9" x="943" y="476"/><use href="#g30" x="949" y="476"/><use href="#g9" x="953" y="476"/><use href="#g7" x="959" y="476"/><use href="#g32" x="965" y="476"/></g><g fill="#000"><use href="#g6" x="570" y="505"/><use href="#g8" x="576" y="505"/><use href="#g27" x="582" y="505"/><use href="#g4" x="588" y="505"/><use href="#g6" x="594" y="505"/><use href="#g27" x="600" y="505"/><use href="#g9" x="606" y="505"/><use href="#g14" x="612" y="505"/></g><g fill="#000"><use href="#g7" x="686" y="505"/><use href="#g30" x="692" y="505"/><use href="#g6" x="696" y="505"/><use href="#g8" x="702" y="505"/><use href="#g14" x="708" y="505"/></g><g fill="#000"><use href="#g7" x="771" y="505"/><use href="#g30" x="777" y="505"/><use href="#g7" x="781" y="505"/><use href="#g9" x="787" y="505"/><use href="#g6" x="793" y="505"/></g><g fill="#000"><use href="#g7" x="855" y="505"/><use href="#g30" x="861" y="505"/><use href="#g6" x="865" y="505"/><use href="#g7" x="871" y="505"/><use href="#g14" x="877" y="505"/></g><g fill="#dd0000"><use href="#g9" x="943" y="505"/><use href="#g30" x="949" y="505"/><use href="#g9" x="953" y="505"/><use href="#g29" x="959" y="505"/><use href="#g7" x="965" y="505"/></g><g fill="#000"><use href="#g6" x="570" y="533"/><use href="#g8" x="576" y="533"/><use href="#g27" x="582" y="533"/><use href="#g4" x="588" y="533"/><use href="#g6" x="594" y="533"/><use href="#g27" x="600" y="533"/><use href="#g9" x="606" y="533"/><use href="#g31" x="612" y="533"/></g><g fill="#000"><use href="#g7" x="686" y="533"/><use href="#g30" x="692" y="533"/><use href="#g6" x="696" y="533"/><use href="#g4" x="702" y="533"/><use href="#g31" x="708" y="533"/></g><g fill="#000"><use href="#g7" x="771" y="533"/><use href="#g30" x="777" y="533"/><use href="#g6" x="781" y="533"/><use href="#g7" x="787" y="533"/><use href="#g14" x="793" y="533"/></g><g fill="#000"><use href="#g7" x="855" y="533"/><use href="#g30" x="861" y="533"/><use href="#g4" x="865" y="533"/><use href="#g14" x="871" y="533"/><use href="#g31" x="877" y="533"/></g><g fill="#dd0000"><use href="#g9" x="943" y="533"/><use href="#g30" x="949" y="533"/><use href="#g9" x="953" y="533"/><use href="#g32" x="959" y="533"/><use href="#g4" x="965" y="533"/></g><g fill="#000"><use href="#g6" x="570" y="561"/><use href="#g8" x="576" y="561"/><use href="#g27" x="582" y="561"/><use href="#g4" x="588" y="561"/><use href="#g6" x="594" y="561"/><use href="#g27" x="600" y="561"/><use href="#g9" x="606" y="561"/><use href="#g8" x="612" y="561"/></g><g fill="#000"><use href="#g7" x="686" y="561"/><use href="#g30" x="692" y="561"/><use href="#g6" x="696" y="561"/><use href="#g9" x="702" y="561"/><use href="#g7" x="708" y="561"/></g><g fill="#000"><use href="#g7" x="771" y="561"/><use href="#g30" x="777" y="561"/><use href="#g4" x="781" y="561"/><use href="#g14" x="787" y="561"/><use href="#g31" x="793" y="561"/></g><g fill="#000"><use href="#g7" x="855" y="561"/><use href="#g30" x="861" y="561"/><use href="#g6" x="865" y="561"/><use href="#g6" x="871" y="561"/><use href="#g14" x="877" y="561"/></g><g fill="#0000dd"><use href="#g22" x="937" y="561"/><use href="#g9" x="943" y="561"/><use href="#g30" x="949" y="561"/><use href="#g9" x="953" y="561"/><use href="#g7" x="959" y="561"/><use href="#g4" x="965" y="561"/></g><g fill="#000"><use href="#g6" x="570" y="590"/><use href="#g8" x="576" y="590"/><use href="#g27" x="582" y="590"/><use href="#g4" x="588" y="590"/><use href="#g6" x="594" y="590"/><use href="#g27" x="600" y="590"/><use href="#g9" x="606" y="590"/><use href="#g32" x="612" y="590"/></g><g fill="#000"><use href="#g7" x="686" y="590"/><use href="#g30" x="692" y="590"/><use href="#g6" x="696" y="590"/><use href="#g32" x="702" y="590"/><use href="#g7" x="708" y="590"/></g><g fill="#000"><use href="#g7" x="771" y="590"/><use href="#g30" x="777" y="590"/><use href="#g6" x="781" y="590"/><use href="#g6" x="787" y="590"/><use href="#g14" x="793" y="590"/></g><g fill="#000"><use href="#g7" x="855" y="590"/><use href="#g30" x="861" y="590"/><use href="#g6" x="865" y="590"/><use href="#g32" x="871" y="590"/><use href="#g29" x="877" y="590"/></g><g fill="#0000dd"><use href="#g22" x="937" y="590"/><use href="#g9" x="943" y="590"/><use href="#g30" x="949" y="590"/><use href="#g9" x="953" y="590"/><use href="#g4" x="959" y="590"/><use href="#g28" x="965" y="590"/></g><g fill="#000"><use href="#g6" x="570" y="618"/><use href="#g8" x="576" y="618"/><use href="#g27" x="582" y="618"/><use href="#g4" x="588" y="618"/><use href="#g6" x="594" y="618"/><use href="#g27" x="600" y="618"/><use href="#g9" x="606" y="618"/><use href="#g7" x="612" y="618"/></g><g fill="#000"><use href="#g7" x="686" y="618"/><use href="#g30" x="692" y="618"/><use href="#g6" x="696" y="618"/><use href="#g32" x="702" y="618"/><use href="#g7" x="708" y="618"/></g><g fill="#000"><use href="#g7" x="771" y="618"/><use href="#g30" x="777" y="618"/><use href="#g6" x="781" y="618"/><use href="#g32" x="787" y="618"/><use href="#g29" x="793" y="618"/></g><g fill="#000"><use href="#g7" x="855" y="618"/><use href="#g30" x="861" y="618"/><use href="#g6" x="865" y="618"/><use href="#g4" x="871" y="618"/><use href="#g4" x="877" y="618"/></g><g fill="#dd0000"><use href="#g9" x="943" y="618"/><use href="#g30" x="949" y="618"/><use href="#g9" x="953" y="618"/><use href="#g7" x="959" y="618"/><use href="#g8" x="965" y="618"/></g><g fill="#000"><use href="#g6" x="570" y="646"/><use href="#g8" x="576" y="646"/><use href="#g27" x="582" y="646"/><use href="#g4" x="588" y="646"/><use href="#g6" x="594" y="646"/><use href="#g27" x="600" y="646"/><use href="#g9" x="606" y="646"/><use href="#g6" x="612" y="646"/></g><g fill="#000"><use href="#g7" x="686" y="646"/><use href="#g30" x="692" y="646"/><use href="#g6" x="696" y="646"/><use href="#g4" x="702" y="646"/><use href="#g31" x="708" y="646"/></g><g fill="#000"><use href="#g7" x="771" y="646"/><use href="#g30" x="777" y="646"/><use href="#g6" x="781" y="646"/><use href="#g4" x="787" y="646"/><use href="#g4" x="793" y="646"/></g><g fill="#000"><use href="#g7" x="855" y="646"/><use href="#g30" x="861" y="646"/><use href="#g6" x="865" y="646"/><use href="#g7" x="871" y="646"/><use href="#g7" x="877" y="646"/></g><g fill="#0000dd"><use href="#g22" x="937" y="646"/><use href="#g9" x="943" y="646"/><use href="#g30" x="949" y="646"/><use href="#g9" x="953" y="646"/><use href="#g6" x="959" y="646"/><use href="#g6" x="965" y="646"/></g><g fill="#000"><use href="#g9" x="17" y="655"/><use href="#g14" x="23" y="655"/></g><g fill="#000"><use href="#g4" x="103" y="655"/><use href="#g9" x="109" y="655"/></g><g fill="#000"><use href="#g4" x="129" y="655"/><use href="#g9" x="135" y="655"/><use href="#g27" x="141" y="655"/><use href="#g4" x="147" y="655"/><use href="#g7" x="153" y="655"/></g><g fill="#000"><use href="#g4" x="181" y="655"/><use href="#g9" x="187" y="655"/><use href="#g27" x="193" y="655"/><use href="#g6" x="199" y="655"/><use href="#g4" x="205" y="655"/></g><g fill="#000"><use href="#g4" x="259" y="655"/><use href="#g4" x="265" y="655"/></g><g fill="#000"><use href="#g4" x="285" y="655"/><use href="#g4" x="291" y="655"/><use href="#g27" x="297" y="655"/><use href="#g9" x="303" y="655"/><use href="#g29" x="309" y="655"/></g><g fill="#000"><use href="#g4" x="337" y="655"/><use href="#g4" x="343" y="655"/><use href="#g27" x="349" y="655"/><use href="#g4" x="355" y="655"/><use href="#g32" x="361" y="655"/></g><g fill="#000"><use href="#g4" x="432" y="655"/><use href="#g6" x="438" y="655"/></g><g fill="#000"><use href="#g4" x="458" y="655"/><use href="#g6" x="464" y="655"/><use href="#g27" x="470" y="655"/><use href="#g9" x="476" y="655"/><use href="#g32" x="482" y="655"/></g><g fill="#000"><use href="#g4" x="539" y="655"/></g><g fill="#dc0000"><use href="#g2" x="9" y="332"/><use href="#g3" x="21" y="332"/><use href="#g7" x="33" y="332"/><use href="#g5" x="39" y="332"/></g><g fill="#ff00ff"><use href="#g2" x="51" y="332"/><use href="#g3" x="63" y="332"/><use href="#g8" x="75" y="332"/><use href="#g5" x="81" y="332"/></g><g fill="#000080"><use href="#g2" x="93" y="332"/><use href="#g3" x="105" y="332"/><use href="#g4" x="117" y="332"/><use href="#g9" x="123" y="332"/><use href="#g5" x="129" y="332"/></g><g fill="#66cc00"><use href="#g19" x="141" y="332"/><use href="#g20" x="153" y="332"/><use href="#g21" x="165" y="332"/><use href="#g21" x="173" y="332"/><use href="#g22" x="181" y="332"/></g></svg>
</body></html>
